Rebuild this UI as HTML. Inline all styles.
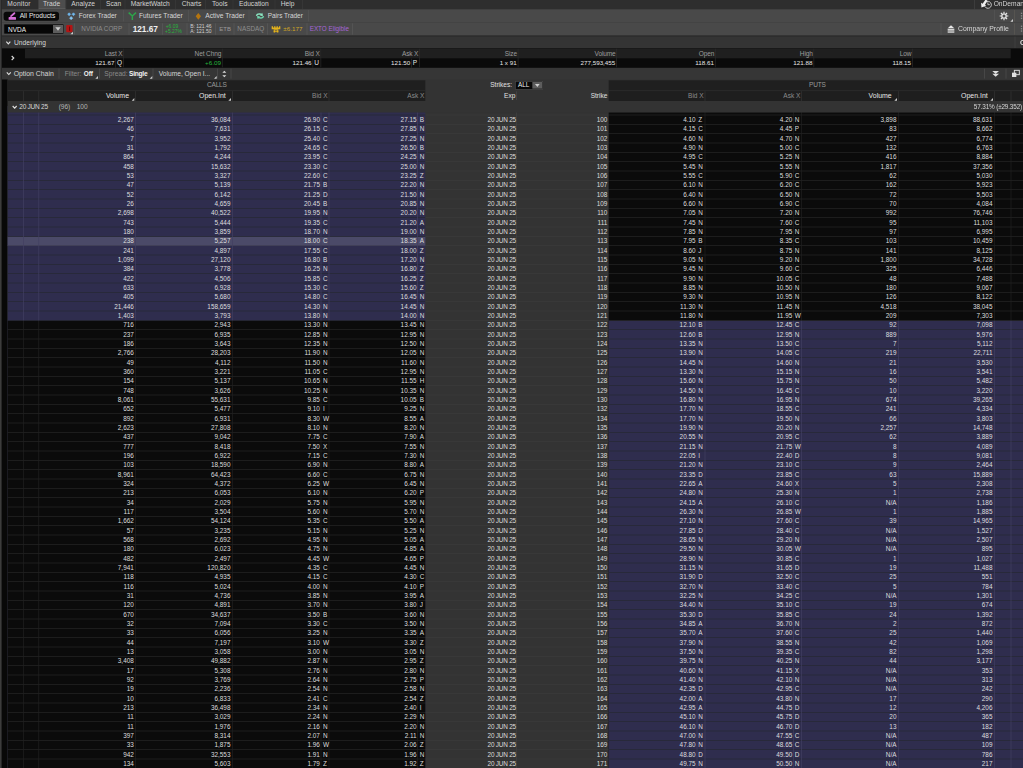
<!DOCTYPE html>
<html><head><meta charset="utf-8"><title>thinkorswim</title>
<style>
html,body{margin:0;padding:0;background:#0a0a0a;overflow:hidden;}
body{width:1023px;height:768px;position:relative;font-family:"Liberation Sans",sans-serif;}
#w{position:absolute;left:0;top:0;width:1534.5px;height:1152px;transform:scale(0.666667);transform-origin:0 0;overflow:hidden;}
#w div,#w svg{position:absolute;}
#w .t{white-space:nowrap;}
</style></head><body><div id="w">
<svg style="left:0;top:0" width="1534.5" height="1152" viewBox="0 0 1534.5 1152">
<rect x="0" y="0" width="1534.5" height="1152" fill="#0a0a0a"/>
<rect x="0" y="0" width="1534.5" height="1152" fill="#2e2e2e"/>
<rect x="57" y="0" width="41.5" height="14" fill="#4d4d4d"/>
<rect x="57" y="12.3" width="41.5" height="1.7" fill="#5c5c5c"/>
<rect x="57" y="0" width="1" height="14" fill="#3b3b3b"/>
<rect x="98.5" y="0" width="1" height="14" fill="#3b3b3b"/>
<rect x="150" y="0" width="1" height="14" fill="#3b3b3b"/>
<rect x="187" y="0" width="1" height="14" fill="#3b3b3b"/>
<rect x="263" y="0" width="1" height="14" fill="#3b3b3b"/>
<rect x="308" y="0" width="1" height="14" fill="#3b3b3b"/>
<rect x="349" y="0" width="1" height="14" fill="#3b3b3b"/>
<rect x="412" y="0" width="1" height="14" fill="#3b3b3b"/>
<rect x="453" y="0" width="1" height="14" fill="#3b3b3b"/>
<rect x="1461" y="0" width="1" height="14" fill="#444"/>
<g transform="translate(1468 0)"><path d="M10.6 3.2A5.2 5.2 0 1 1 9.2 9.6" fill="none" stroke="#dcdcdc" stroke-width="1.3"/><path d="M13.8 3.6v3.4h3" fill="none" stroke="#dcdcdc" stroke-width="1.2"/><path d="M10.2 -0.5L13.2 0.8 9.4 7.4 11.4 8.8 4.2 11.2 3.6 4.2 5.9 5.6z" fill="#efefef"/></g>
<rect x="0" y="14" width="1534.5" height="1152" fill="#494949"/>
<rect x="0" y="33" width="1534.5" height="1" fill="#414141"/>
<rect x="5.5" y="17.5" width="83" height="13.5" fill="#090909" rx="4"/>
<rect x="184.5" y="15" width="1" height="17" fill="#565656"/>
<rect x="282.5" y="15" width="1" height="17" fill="#565656"/>
<rect x="373" y="15" width="1" height="17" fill="#565656"/>
<rect x="462" y="15" width="1" height="17" fill="#565656"/>
<g transform="translate(9 17)"><path d="M7.6 7.2L12.6 2.8" stroke="#d570d6" stroke-width="2.7" stroke-linecap="round" fill="none"/><rect x="3.9" y="8.6" width="11.1" height="4.1" rx="1" fill="#d570d6"/></g>
<g transform="translate(100 17)"><path d="M3.7 2.2L5.9 4.4L3.7 6.6000000000000005L1.5 4.4z" fill="#6fb8ee" stroke="#6fb8ee" stroke-width="1" stroke-linejoin="round"/><path d="M10.2 2.2L12.399999999999999 4.4L10.2 6.6000000000000005L7.999999999999999 4.4z" fill="#6fb8ee" stroke="#6fb8ee" stroke-width="1" stroke-linejoin="round"/><path d="M6.7 7.8999999999999995L9.0 10.2L6.7 12.5L4.4 10.2z" fill="#86c8f6" stroke="#86c8f6" stroke-width="1" stroke-linejoin="round"/></g>
<g transform="translate(191 17)"><path d="M2 2l5.5 5v6M13 2l-5.5 5" fill="none" stroke="#2da44a" stroke-width="2.2"/></g>
<g transform="translate(291 18)"><path d="M6.5 1.5l4 5-4 5-4-5z" fill="#b4740f"/></g>
<g transform="translate(383 18.5)"><path d="M0.8 5.2C1.2 1.6 5.5 0.6 9 2.2l1.3-1.6 1.4 4.6-4.6 0.2 1-1.5C5.6 2.9 3.2 3.6 2.8 5.6z" fill="#8ce6c2"/><path d="M13.2 5.8C12.8 9.4 8.5 10.4 5 8.8l-1.3 1.6L2.3 5.8l4.6-0.2-1 1.5c2.5 1 4.9 0.3 5.3-1.7z" fill="#6fd6ae"/></g>
<g transform="translate(1499 17)"><circle cx="7" cy="7" r="3.3" fill="none" stroke="#e6e6e6" stroke-width="2"/><g stroke="#e6e6e6" stroke-width="1.8"><path d="M7 0.5v2.3M7 11.2v2.3M0.5 7h2.3M11.2 7h2.3M2.4 2.4l1.6 1.6M10 10l1.6 1.6M11.6 2.4L10 4M4 10l-1.6 1.6"/></g></g>
<g transform="translate(1515.5 28.5)"><path d="M4 0v4H0z" fill="#ccc"/></g>
<rect x="1491.5" y="15" width="1" height="17" fill="#565656"/>
<rect x="1521" y="15" width="1" height="17" fill="#5e5a54"/>
<rect x="1531.3" y="19" width="2" height="2" fill="#8a8a8a"/>
<rect x="1531.3" y="22.8" width="2" height="2" fill="#8a8a8a"/>
<rect x="1531.3" y="26.5" width="2" height="2" fill="#8a8a8a"/>
<rect x="5.8" y="36" width="90" height="15" fill="#060606" stroke="#505050" stroke-width="1"/>
<rect x="79.5" y="37.5" width="15" height="12" fill="#5d5d5d"/>
<g transform="translate(83 41)"><path d="M0 0h8L4 5z" fill="#cfcfcf"/></g>
<rect x="99.3" y="37.5" width="9.5" height="11" fill="#b31414" rx="1.5"/>
<rect x="103.6" y="39.8" width="1.5" height="6.5" fill="#6a0808"/>
<g transform="translate(105.5 47.5)"><path d="M4 0v4H0z" fill="#ccc"/></g>
<rect x="111.5" y="35" width="1" height="17" fill="#5a5a5a"/>
<rect x="193" y="35" width="1" height="17" fill="#5a5a5a"/>
<rect x="243" y="35" width="1" height="17" fill="#5a5a5a"/>
<rect x="280" y="35" width="1" height="17" fill="#5a5a5a"/>
<rect x="323" y="35" width="1" height="17" fill="#5a5a5a"/>
<rect x="350.5" y="35" width="1" height="17" fill="#5a5a5a"/>
<rect x="400.5" y="35" width="1" height="17" fill="#5a5a5a"/>
<g transform="translate(407.5 39.3)"><path d="M0 0h2v2h1.7V0h2v2h1.6V0h2v2h1.7V0h2v4.6H0z" fill="#e3b21c"/><rect x="3" y="4.6" width="7" height="1.4" fill="#e3b21c"/><rect x="3" y="6" width="2.3" height="3.5" fill="#e3b21c"/><rect x="7.7" y="6" width="2.3" height="3.5" fill="#e3b21c"/><rect x="3" y="7" width="7" height="1.3" fill="#e3b21c"/></g>
<rect x="460" y="35" width="1" height="17" fill="#5a5a5a"/>
<rect x="528.5" y="35" width="1" height="17" fill="#5a5a5a"/>
<rect x="1411" y="35" width="1" height="17" fill="#5a5a5a"/>
<g transform="translate(1421 38)"><path d="M5.5 0L10 4H1z" fill="#e8e8e8"/><rect x="0.5" y="5" width="10" height="1.8" fill="#e8e8e8"/><rect x="0.5" y="7.6" width="10" height="1.6" fill="#e8e8e8"/><rect x="0.5" y="9.6" width="10" height="1.4" fill="#e8e8e8"/></g>
<rect x="1521" y="35" width="1" height="17" fill="#5e5a54"/>
<rect x="1531.3" y="38.4" width="2" height="2" fill="#8a8a8a"/>
<rect x="1531.3" y="42.1" width="2" height="2" fill="#8a8a8a"/>
<rect x="1531.3" y="45.6" width="2" height="2" fill="#8a8a8a"/>
<rect x="0" y="53" width="1534.5" height="1152" fill="#2a2a2a"/>
<rect x="0" y="55" width="1534.5" height="1152" fill="#343434"/>
<rect x="1522" y="55" width="1" height="17.5" fill="#474747"/>
<g transform="translate(8.5 61.5)"><path d="M1 1l3 3.2L7 1" fill="none" stroke="#e0e0e0" stroke-width="1.7"/></g>
<rect x="2.5" y="72.5" width="1534.5" height="1152" fill="#0a0a0a"/>
<rect x="37.5" y="73" width="1478.6" height="14.5" fill="#1f1f1f"/>
<rect x="185" y="73" width="1" height="28" fill="#2c2c2c"/>
<rect x="332.9" y="73" width="1" height="28" fill="#2c2c2c"/>
<rect x="480.8" y="73" width="1" height="28" fill="#2c2c2c"/>
<rect x="628.7" y="73" width="1" height="28" fill="#2c2c2c"/>
<rect x="776.6" y="73" width="1" height="28" fill="#2c2c2c"/>
<rect x="924.5" y="73" width="1" height="28" fill="#2c2c2c"/>
<rect x="1072.4" y="73" width="1" height="28" fill="#2c2c2c"/>
<rect x="1220.3" y="73" width="1" height="28" fill="#2c2c2c"/>
<rect x="1368.2" y="73" width="1" height="28" fill="#2c2c2c"/>
<g transform="translate(16.5 83)"><path d="M1 1l3.2 3L1 7" fill="none" stroke="#e0e0e0" stroke-width="1.6"/></g>
<rect x="173" y="88" width="1" height="13.6" fill="#2c2c2c"/>
<rect x="468.8" y="88" width="1" height="13.6" fill="#2c2c2c"/>
<rect x="616.7" y="88" width="1" height="13.6" fill="#2c2c2c"/>
<rect x="0" y="101.7" width="1534.5" height="1152" fill="#363636"/>
<g transform="translate(9.2 107.6)"><path d="M1 1l3 3.2L7 1" fill="none" stroke="#e0e0e0" stroke-width="1.7"/></g>
<rect x="88" y="103" width="1" height="15" fill="#505050"/>
<rect x="148.5" y="103" width="1" height="15" fill="#505050"/>
<rect x="229" y="103" width="1" height="15" fill="#505050"/>
<rect x="326" y="103" width="1" height="15" fill="#505050"/>
<rect x="346" y="103" width="1" height="15" fill="#505050"/>
<g transform="translate(143 114)"><path d="M4 0v4H0z" fill="#ccc"/></g>
<g transform="translate(224.5 114)"><path d="M4 0v4H0z" fill="#ccc"/></g>
<g transform="translate(321 114)"><path d="M4 0v4H0z" fill="#ccc"/></g>
<g transform="translate(333 105)"><path d="M0.5 4l3-3 3 3zM0.5 8l3 3 3-3z" fill="#dcdcdc"/></g>
<rect x="1476.5" y="103" width="1" height="15" fill="#505050"/>
<rect x="1508.5" y="103" width="1" height="15" fill="#505050"/>
<g transform="translate(1486.5 104)"><path d="M2 2.5h10L7 7z" fill="#e0e0e0"/><path d="M2 6.5h10L7 11z" fill="#e0e0e0"/></g>
<g transform="translate(1516.5 104)"><rect x="5" y="1.5" width="7.5" height="6.5" fill="#3b3b3b" stroke="#e0e0e0" stroke-width="1.4"/><rect x="1.5" y="5" width="6.5" height="6.5" fill="#e0e0e0"/></g>
<rect x="2.5" y="119.2" width="9" height="1152" fill="#080808"/>
<rect x="11.5" y="159" width="1523" height="1152" fill="#333333"/>
<rect x="11.5" y="159" width="626.5" height="1152" fill="#2f2d4e"/>
<rect x="11.5" y="481" width="626.5" height="1152" fill="#0b0b0b"/>
<rect x="913" y="159" width="621.5" height="1152" fill="#0b0b0b"/>
<rect x="913" y="481" width="621.5" height="1152" fill="#2f2d4e"/>
<rect x="11.5" y="355" width="626.5" height="14" fill="#4b4a68"/>
<rect x="11.5" y="172" width="626.5" height="1" fill="#262730"/>
<rect x="638" y="172" width="275" height="1" fill="#3b3b3b"/>
<rect x="913" y="172" width="621.5" height="1" fill="#272727"/>
<rect x="11.5" y="186" width="626.5" height="1" fill="#262730"/>
<rect x="638" y="186" width="275" height="1" fill="#3b3b3b"/>
<rect x="913" y="186" width="621.5" height="1" fill="#272727"/>
<rect x="11.5" y="200" width="626.5" height="1" fill="#262730"/>
<rect x="638" y="200" width="275" height="1" fill="#3b3b3b"/>
<rect x="913" y="200" width="621.5" height="1" fill="#272727"/>
<rect x="11.5" y="214" width="626.5" height="1" fill="#262730"/>
<rect x="638" y="214" width="275" height="1" fill="#3b3b3b"/>
<rect x="913" y="214" width="621.5" height="1" fill="#272727"/>
<rect x="11.5" y="228" width="626.5" height="1" fill="#262730"/>
<rect x="638" y="228" width="275" height="1" fill="#3b3b3b"/>
<rect x="913" y="228" width="621.5" height="1" fill="#272727"/>
<rect x="11.5" y="242" width="626.5" height="1" fill="#262730"/>
<rect x="638" y="242" width="275" height="1" fill="#3b3b3b"/>
<rect x="913" y="242" width="621.5" height="1" fill="#272727"/>
<rect x="11.5" y="256" width="626.5" height="1" fill="#262730"/>
<rect x="638" y="256" width="275" height="1" fill="#3b3b3b"/>
<rect x="913" y="256" width="621.5" height="1" fill="#272727"/>
<rect x="11.5" y="270" width="626.5" height="1" fill="#262730"/>
<rect x="638" y="270" width="275" height="1" fill="#3b3b3b"/>
<rect x="913" y="270" width="621.5" height="1" fill="#272727"/>
<rect x="11.5" y="284" width="626.5" height="1" fill="#262730"/>
<rect x="638" y="284" width="275" height="1" fill="#3b3b3b"/>
<rect x="913" y="284" width="621.5" height="1" fill="#272727"/>
<rect x="11.5" y="298" width="626.5" height="1" fill="#262730"/>
<rect x="638" y="298" width="275" height="1" fill="#3b3b3b"/>
<rect x="913" y="298" width="621.5" height="1" fill="#272727"/>
<rect x="11.5" y="312" width="626.5" height="1" fill="#262730"/>
<rect x="638" y="312" width="275" height="1" fill="#3b3b3b"/>
<rect x="913" y="312" width="621.5" height="1" fill="#272727"/>
<rect x="11.5" y="326" width="626.5" height="1" fill="#262730"/>
<rect x="638" y="326" width="275" height="1" fill="#3b3b3b"/>
<rect x="913" y="326" width="621.5" height="1" fill="#272727"/>
<rect x="11.5" y="340" width="626.5" height="1" fill="#262730"/>
<rect x="638" y="340" width="275" height="1" fill="#3b3b3b"/>
<rect x="913" y="340" width="621.5" height="1" fill="#272727"/>
<rect x="11.5" y="354" width="626.5" height="1" fill="#262730"/>
<rect x="638" y="354" width="275" height="1" fill="#3b3b3b"/>
<rect x="913" y="354" width="621.5" height="1" fill="#272727"/>
<rect x="11.5" y="368" width="626.5" height="1" fill="#3c3c52"/>
<rect x="638" y="368" width="275" height="1" fill="#3b3b3b"/>
<rect x="913" y="368" width="621.5" height="1" fill="#272727"/>
<rect x="11.5" y="382" width="626.5" height="1" fill="#262730"/>
<rect x="638" y="382" width="275" height="1" fill="#3b3b3b"/>
<rect x="913" y="382" width="621.5" height="1" fill="#272727"/>
<rect x="11.5" y="396" width="626.5" height="1" fill="#262730"/>
<rect x="638" y="396" width="275" height="1" fill="#3b3b3b"/>
<rect x="913" y="396" width="621.5" height="1" fill="#272727"/>
<rect x="11.5" y="410" width="626.5" height="1" fill="#262730"/>
<rect x="638" y="410" width="275" height="1" fill="#3b3b3b"/>
<rect x="913" y="410" width="621.5" height="1" fill="#272727"/>
<rect x="11.5" y="424" width="626.5" height="1" fill="#262730"/>
<rect x="638" y="424" width="275" height="1" fill="#3b3b3b"/>
<rect x="913" y="424" width="621.5" height="1" fill="#272727"/>
<rect x="11.5" y="438" width="626.5" height="1" fill="#262730"/>
<rect x="638" y="438" width="275" height="1" fill="#3b3b3b"/>
<rect x="913" y="438" width="621.5" height="1" fill="#272727"/>
<rect x="11.5" y="452" width="626.5" height="1" fill="#262730"/>
<rect x="638" y="452" width="275" height="1" fill="#3b3b3b"/>
<rect x="913" y="452" width="621.5" height="1" fill="#272727"/>
<rect x="11.5" y="466" width="626.5" height="1" fill="#262730"/>
<rect x="638" y="466" width="275" height="1" fill="#3b3b3b"/>
<rect x="913" y="466" width="621.5" height="1" fill="#272727"/>
<rect x="11.5" y="480" width="626.5" height="1" fill="#262730"/>
<rect x="638" y="480" width="275" height="1" fill="#3b3b3b"/>
<rect x="913" y="480" width="621.5" height="1" fill="#272727"/>
<rect x="11.5" y="494" width="626.5" height="1" fill="#272727"/>
<rect x="638" y="494" width="275" height="1" fill="#3b3b3b"/>
<rect x="913" y="494" width="621.5" height="1" fill="#262730"/>
<rect x="11.5" y="508" width="626.5" height="1" fill="#272727"/>
<rect x="638" y="508" width="275" height="1" fill="#3b3b3b"/>
<rect x="913" y="508" width="621.5" height="1" fill="#262730"/>
<rect x="11.5" y="522" width="626.5" height="1" fill="#272727"/>
<rect x="638" y="522" width="275" height="1" fill="#3b3b3b"/>
<rect x="913" y="522" width="621.5" height="1" fill="#262730"/>
<rect x="11.5" y="536" width="626.5" height="1" fill="#272727"/>
<rect x="638" y="536" width="275" height="1" fill="#3b3b3b"/>
<rect x="913" y="536" width="621.5" height="1" fill="#262730"/>
<rect x="11.5" y="550" width="626.5" height="1" fill="#272727"/>
<rect x="638" y="550" width="275" height="1" fill="#3b3b3b"/>
<rect x="913" y="550" width="621.5" height="1" fill="#262730"/>
<rect x="11.5" y="564" width="626.5" height="1" fill="#272727"/>
<rect x="638" y="564" width="275" height="1" fill="#3b3b3b"/>
<rect x="913" y="564" width="621.5" height="1" fill="#262730"/>
<rect x="11.5" y="578" width="626.5" height="1" fill="#272727"/>
<rect x="638" y="578" width="275" height="1" fill="#3b3b3b"/>
<rect x="913" y="578" width="621.5" height="1" fill="#262730"/>
<rect x="11.5" y="592" width="626.5" height="1" fill="#272727"/>
<rect x="638" y="592" width="275" height="1" fill="#3b3b3b"/>
<rect x="913" y="592" width="621.5" height="1" fill="#262730"/>
<rect x="11.5" y="606" width="626.5" height="1" fill="#272727"/>
<rect x="638" y="606" width="275" height="1" fill="#3b3b3b"/>
<rect x="913" y="606" width="621.5" height="1" fill="#262730"/>
<rect x="11.5" y="620" width="626.5" height="1" fill="#272727"/>
<rect x="638" y="620" width="275" height="1" fill="#3b3b3b"/>
<rect x="913" y="620" width="621.5" height="1" fill="#262730"/>
<rect x="11.5" y="634" width="626.5" height="1" fill="#272727"/>
<rect x="638" y="634" width="275" height="1" fill="#3b3b3b"/>
<rect x="913" y="634" width="621.5" height="1" fill="#262730"/>
<rect x="11.5" y="648" width="626.5" height="1" fill="#272727"/>
<rect x="638" y="648" width="275" height="1" fill="#3b3b3b"/>
<rect x="913" y="648" width="621.5" height="1" fill="#262730"/>
<rect x="11.5" y="662" width="626.5" height="1" fill="#272727"/>
<rect x="638" y="662" width="275" height="1" fill="#3b3b3b"/>
<rect x="913" y="662" width="621.5" height="1" fill="#262730"/>
<rect x="11.5" y="676" width="626.5" height="1" fill="#272727"/>
<rect x="638" y="676" width="275" height="1" fill="#3b3b3b"/>
<rect x="913" y="676" width="621.5" height="1" fill="#262730"/>
<rect x="11.5" y="690" width="626.5" height="1" fill="#272727"/>
<rect x="638" y="690" width="275" height="1" fill="#3b3b3b"/>
<rect x="913" y="690" width="621.5" height="1" fill="#262730"/>
<rect x="11.5" y="704" width="626.5" height="1" fill="#272727"/>
<rect x="638" y="704" width="275" height="1" fill="#3b3b3b"/>
<rect x="913" y="704" width="621.5" height="1" fill="#262730"/>
<rect x="11.5" y="718" width="626.5" height="1" fill="#272727"/>
<rect x="638" y="718" width="275" height="1" fill="#3b3b3b"/>
<rect x="913" y="718" width="621.5" height="1" fill="#262730"/>
<rect x="11.5" y="732" width="626.5" height="1" fill="#272727"/>
<rect x="638" y="732" width="275" height="1" fill="#3b3b3b"/>
<rect x="913" y="732" width="621.5" height="1" fill="#262730"/>
<rect x="11.5" y="746" width="626.5" height="1" fill="#272727"/>
<rect x="638" y="746" width="275" height="1" fill="#3b3b3b"/>
<rect x="913" y="746" width="621.5" height="1" fill="#262730"/>
<rect x="11.5" y="760" width="626.5" height="1" fill="#272727"/>
<rect x="638" y="760" width="275" height="1" fill="#3b3b3b"/>
<rect x="913" y="760" width="621.5" height="1" fill="#262730"/>
<rect x="11.5" y="774" width="626.5" height="1" fill="#272727"/>
<rect x="638" y="774" width="275" height="1" fill="#3b3b3b"/>
<rect x="913" y="774" width="621.5" height="1" fill="#262730"/>
<rect x="11.5" y="788" width="626.5" height="1" fill="#272727"/>
<rect x="638" y="788" width="275" height="1" fill="#3b3b3b"/>
<rect x="913" y="788" width="621.5" height="1" fill="#262730"/>
<rect x="11.5" y="802" width="626.5" height="1" fill="#272727"/>
<rect x="638" y="802" width="275" height="1" fill="#3b3b3b"/>
<rect x="913" y="802" width="621.5" height="1" fill="#262730"/>
<rect x="11.5" y="816" width="626.5" height="1" fill="#272727"/>
<rect x="638" y="816" width="275" height="1" fill="#3b3b3b"/>
<rect x="913" y="816" width="621.5" height="1" fill="#262730"/>
<rect x="11.5" y="830" width="626.5" height="1" fill="#272727"/>
<rect x="638" y="830" width="275" height="1" fill="#3b3b3b"/>
<rect x="913" y="830" width="621.5" height="1" fill="#262730"/>
<rect x="11.5" y="844" width="626.5" height="1" fill="#272727"/>
<rect x="638" y="844" width="275" height="1" fill="#3b3b3b"/>
<rect x="913" y="844" width="621.5" height="1" fill="#262730"/>
<rect x="11.5" y="858" width="626.5" height="1" fill="#272727"/>
<rect x="638" y="858" width="275" height="1" fill="#3b3b3b"/>
<rect x="913" y="858" width="621.5" height="1" fill="#262730"/>
<rect x="11.5" y="872" width="626.5" height="1" fill="#272727"/>
<rect x="638" y="872" width="275" height="1" fill="#3b3b3b"/>
<rect x="913" y="872" width="621.5" height="1" fill="#262730"/>
<rect x="11.5" y="886" width="626.5" height="1" fill="#272727"/>
<rect x="638" y="886" width="275" height="1" fill="#3b3b3b"/>
<rect x="913" y="886" width="621.5" height="1" fill="#262730"/>
<rect x="11.5" y="900" width="626.5" height="1" fill="#272727"/>
<rect x="638" y="900" width="275" height="1" fill="#3b3b3b"/>
<rect x="913" y="900" width="621.5" height="1" fill="#262730"/>
<rect x="11.5" y="914" width="626.5" height="1" fill="#272727"/>
<rect x="638" y="914" width="275" height="1" fill="#3b3b3b"/>
<rect x="913" y="914" width="621.5" height="1" fill="#262730"/>
<rect x="11.5" y="928" width="626.5" height="1" fill="#272727"/>
<rect x="638" y="928" width="275" height="1" fill="#3b3b3b"/>
<rect x="913" y="928" width="621.5" height="1" fill="#262730"/>
<rect x="11.5" y="942" width="626.5" height="1" fill="#272727"/>
<rect x="638" y="942" width="275" height="1" fill="#3b3b3b"/>
<rect x="913" y="942" width="621.5" height="1" fill="#262730"/>
<rect x="11.5" y="956" width="626.5" height="1" fill="#272727"/>
<rect x="638" y="956" width="275" height="1" fill="#3b3b3b"/>
<rect x="913" y="956" width="621.5" height="1" fill="#262730"/>
<rect x="11.5" y="970" width="626.5" height="1" fill="#272727"/>
<rect x="638" y="970" width="275" height="1" fill="#3b3b3b"/>
<rect x="913" y="970" width="621.5" height="1" fill="#262730"/>
<rect x="11.5" y="984" width="626.5" height="1" fill="#272727"/>
<rect x="638" y="984" width="275" height="1" fill="#3b3b3b"/>
<rect x="913" y="984" width="621.5" height="1" fill="#262730"/>
<rect x="11.5" y="998" width="626.5" height="1" fill="#272727"/>
<rect x="638" y="998" width="275" height="1" fill="#3b3b3b"/>
<rect x="913" y="998" width="621.5" height="1" fill="#262730"/>
<rect x="11.5" y="1012" width="626.5" height="1" fill="#272727"/>
<rect x="638" y="1012" width="275" height="1" fill="#3b3b3b"/>
<rect x="913" y="1012" width="621.5" height="1" fill="#262730"/>
<rect x="11.5" y="1026" width="626.5" height="1" fill="#272727"/>
<rect x="638" y="1026" width="275" height="1" fill="#3b3b3b"/>
<rect x="913" y="1026" width="621.5" height="1" fill="#262730"/>
<rect x="11.5" y="1040" width="626.5" height="1" fill="#272727"/>
<rect x="638" y="1040" width="275" height="1" fill="#3b3b3b"/>
<rect x="913" y="1040" width="621.5" height="1" fill="#262730"/>
<rect x="11.5" y="1054" width="626.5" height="1" fill="#272727"/>
<rect x="638" y="1054" width="275" height="1" fill="#3b3b3b"/>
<rect x="913" y="1054" width="621.5" height="1" fill="#262730"/>
<rect x="11.5" y="1068" width="626.5" height="1" fill="#272727"/>
<rect x="638" y="1068" width="275" height="1" fill="#3b3b3b"/>
<rect x="913" y="1068" width="621.5" height="1" fill="#262730"/>
<rect x="11.5" y="1082" width="626.5" height="1" fill="#272727"/>
<rect x="638" y="1082" width="275" height="1" fill="#3b3b3b"/>
<rect x="913" y="1082" width="621.5" height="1" fill="#262730"/>
<rect x="11.5" y="1096" width="626.5" height="1" fill="#272727"/>
<rect x="638" y="1096" width="275" height="1" fill="#3b3b3b"/>
<rect x="913" y="1096" width="621.5" height="1" fill="#262730"/>
<rect x="11.5" y="1110" width="626.5" height="1" fill="#272727"/>
<rect x="638" y="1110" width="275" height="1" fill="#3b3b3b"/>
<rect x="913" y="1110" width="621.5" height="1" fill="#262730"/>
<rect x="11.5" y="1124" width="626.5" height="1" fill="#272727"/>
<rect x="638" y="1124" width="275" height="1" fill="#3b3b3b"/>
<rect x="913" y="1124" width="621.5" height="1" fill="#262730"/>
<rect x="11.5" y="1138" width="626.5" height="1" fill="#272727"/>
<rect x="638" y="1138" width="275" height="1" fill="#3b3b3b"/>
<rect x="913" y="1138" width="621.5" height="1" fill="#262730"/>
<rect x="11.5" y="1152" width="626.5" height="1" fill="#272727"/>
<rect x="638" y="1152" width="275" height="1" fill="#3b3b3b"/>
<rect x="913" y="1152" width="621.5" height="1" fill="#262730"/>
<rect x="34.7" y="159" width="1" height="322" fill="#424062"/>
<rect x="34.7" y="481" width="1" height="671" fill="#222222"/>
<rect x="57.7" y="159" width="1" height="322" fill="#424062"/>
<rect x="57.7" y="481" width="1" height="671" fill="#222222"/>
<rect x="203" y="159" width="1" height="322" fill="#424062"/>
<rect x="203" y="481" width="1" height="671" fill="#222222"/>
<rect x="348" y="159" width="1" height="322" fill="#424062"/>
<rect x="348" y="481" width="1" height="671" fill="#222222"/>
<rect x="493" y="159" width="1" height="322" fill="#424062"/>
<rect x="493" y="481" width="1" height="671" fill="#222222"/>
<rect x="481" y="159" width="1" height="322" fill="#424062"/>
<rect x="481" y="481" width="1" height="671" fill="#222222"/>
<rect x="626" y="159" width="1" height="322" fill="#424062"/>
<rect x="626" y="481" width="1" height="671" fill="#222222"/>
<rect x="774.5" y="159" width="1" height="993" fill="#424242"/>
<rect x="1057" y="159" width="1" height="322" fill="#222222"/>
<rect x="1057" y="481" width="1" height="671" fill="#424062"/>
<rect x="1202" y="159" width="1" height="322" fill="#222222"/>
<rect x="1202" y="481" width="1" height="671" fill="#424062"/>
<rect x="1347" y="159" width="1" height="322" fill="#222222"/>
<rect x="1347" y="481" width="1" height="671" fill="#424062"/>
<rect x="1491" y="159" width="1" height="322" fill="#222222"/>
<rect x="1491" y="481" width="1" height="671" fill="#424062"/>
<rect x="1516" y="159" width="1" height="322" fill="#222222"/>
<rect x="1516" y="481" width="1" height="671" fill="#424062"/>
<rect x="1045" y="159" width="1" height="322" fill="#222222"/>
<rect x="1045" y="481" width="1" height="671" fill="#424062"/>
<rect x="1190" y="159" width="1" height="322" fill="#222222"/>
<rect x="1190" y="481" width="1" height="671" fill="#424062"/>
<rect x="11.5" y="119.2" width="1523" height="49.6" fill="#333333"/>
<rect x="11.5" y="120.5" width="626.5" height="14.5" fill="#1f1f1f"/>
<rect x="11.5" y="135.5" width="626.5" height="16" fill="#1e1e1e"/>
<rect x="11.5" y="135.6" width="626.5" height="1" fill="#2b2b2b"/>
<rect x="913" y="120.5" width="621.5" height="14.5" fill="#1f1f1f"/>
<rect x="913" y="135.5" width="621.5" height="16" fill="#1e1e1e"/>
<rect x="913" y="135.6" width="621.5" height="1" fill="#2b2b2b"/>
<rect x="34.7" y="136.6" width="1" height="14.9" fill="#333"/>
<rect x="57.7" y="136.6" width="1" height="14.9" fill="#333"/>
<rect x="203" y="136.6" width="1" height="14.9" fill="#333"/>
<rect x="348" y="136.6" width="1" height="14.9" fill="#333"/>
<rect x="493" y="136.6" width="1" height="14.9" fill="#333"/>
<rect x="1057" y="136.6" width="1" height="14.9" fill="#333"/>
<rect x="1202" y="136.6" width="1" height="14.9" fill="#333"/>
<rect x="1347" y="136.6" width="1" height="14.9" fill="#333"/>
<rect x="1491" y="136.6" width="1" height="14.9" fill="#333"/>
<rect x="1516" y="136.6" width="1" height="14.9" fill="#333"/>
<g transform="translate(197.5 147)"><path d="M4 0v4H0z" fill="#ccc"/></g>
<g transform="translate(342.5 147)"><path d="M4 0v4H0z" fill="#ccc"/></g>
<g transform="translate(1341.5 147)"><path d="M4 0v4H0z" fill="#ccc"/></g>
<g transform="translate(1485.5 147)"><path d="M4 0v4H0z" fill="#ccc"/></g>
<rect x="773" y="122" width="41" height="12" fill="#080808" stroke="#4a4a4a" stroke-width="1"/>
<rect x="798.5" y="123" width="14.5" height="10" fill="#5d5d5d"/>
<g transform="translate(802 126)"><path d="M0.5 0h7L4 4.5z" fill="#cfcfcf"/></g>
<rect x="774.5" y="137" width="1" height="13" fill="#4a4a4a"/>
<g transform="translate(18 158)"><path d="M1 1l3 3.2L7 1" fill="none" stroke="#e0e0e0" stroke-width="1.7"/></g>
<rect x="1.8" y="0" width="1.2" height="1152" fill="#1e1e1e"/>
<rect x="0" y="0" width="1.9" height="1152" fill="#3c3c3c"/>
</svg>
<div class="t" style="left:11px;top:-1.2px;line-height:14px;font-size:10px;color:#d2d2d2;letter-spacing:0.25px;">Monitor</div>
<div class="t" style="left:64.5px;top:-1.2px;line-height:14px;font-size:10px;color:#d2d2d2;">Trade</div>
<div class="t" style="left:107px;top:-1.2px;line-height:14px;font-size:10px;color:#d2d2d2;">Analyze</div>
<div class="t" style="left:159px;top:-1.2px;line-height:14px;font-size:10px;color:#d2d2d2;">Scan</div>
<div class="t" style="left:196px;top:-1.2px;line-height:14px;font-size:10px;color:#d2d2d2;">MarketWatch</div>
<div class="t" style="left:272.5px;top:-1.2px;line-height:14px;font-size:10px;color:#d2d2d2;">Charts</div>
<div class="t" style="left:318px;top:-1.2px;line-height:14px;font-size:10px;color:#d2d2d2;">Tools</div>
<div class="t" style="left:358.5px;top:-1.2px;line-height:14px;font-size:10px;color:#d2d2d2;">Education</div>
<div class="t" style="left:421px;top:-1.2px;line-height:14px;font-size:10px;color:#d2d2d2;">Help</div>
<div class="t" style="left:1490.5px;top:-1.2px;line-height:14px;font-size:10px;color:#d2d2d2;">OnDemand</div>
<div class="t" style="left:29.5px;top:16.7px;line-height:14px;font-size:10px;color:#e8e8e8;">All Products</div>
<div class="t" style="left:118px;top:16.7px;line-height:14px;font-size:10px;color:#d6d6d6;">Forex Trader</div>
<div class="t" style="left:208.5px;top:16.7px;line-height:14px;font-size:10px;color:#d6d6d6;">Futures Trader</div>
<div class="t" style="left:308px;top:16.7px;line-height:14px;font-size:10px;color:#d6d6d6;">Active Trader</div>
<div class="t" style="left:401.5px;top:16.7px;line-height:14px;font-size:9.7px;color:#d6d6d6;">Pairs Trader</div>
<div class="t" style="left:12px;top:37.8px;line-height:14px;font-size:9.7px;color:#eeeeee;">NVDA</div>
<div class="t" style="left:122px;top:37px;line-height:14px;font-size:9.5px;color:#8e8e8e;">NVIDIA CORP</div>
<div class="t" style="left:199px;top:37px;line-height:14px;font-size:12.4px;color:#efefef;font-weight:700;">121.67</div>
<div class="t" style="left:248.5px;top:35.6px;line-height:8px;font-size:7.4px;color:#26b43c;">+6.09</div>
<div class="t" style="left:247.5px;top:43.1px;line-height:8px;font-size:7.4px;color:#26b43c;">+5.27%</div>
<div class="t" style="left:285.3px;top:35.6px;line-height:8px;font-size:7.5px;color:#d0d0d0;">B: 121.46</div>
<div class="t" style="left:285.3px;top:43.1px;line-height:8px;font-size:7.5px;color:#d0d0d0;">A: 121.50</div>
<div class="t" style="left:329px;top:37px;line-height:14px;font-size:9px;color:#9a9a9a;">ETB</div>
<div class="t" style="left:356px;top:37px;line-height:14px;font-size:9.6px;color:#8e8e8e;">NASDAQ</div>
<div class="t" style="left:425px;top:37px;line-height:14px;font-size:9.4px;color:#cfa526;">±6.177</div>
<div class="t" style="left:464.5px;top:37px;line-height:14px;font-size:9.5px;color:#a565d6;">EXTO Eligible</div>
<div class="t" style="left:1437px;top:37px;line-height:14px;font-size:10.3px;color:#d6d6d6;">Company Profile</div>
<div class="t" style="left:1530px;top:57.5px;line-height:14px;font-size:10.4px;color:#e0e0e0;font-weight:700;">C</div>
<div class="t" style="left:21px;top:57.5px;line-height:14px;font-size:10px;color:#d6d6d6;">Underlying</div>
<div class="t" style="right:1350.7px;top:73.5px;line-height:14px;font-size:9.8px;color:#9c9c9c;letter-spacing:-0.2px;">Last X</div>
<div class="t" style="right:1362.9px;top:88.2px;line-height:14px;font-size:9.4px;color:#e6e6e6;">121.67</div>
<div class="t" style="left:175.6px;top:88.2px;line-height:14px;font-size:9.8px;color:#e6e6e6;">Q</div>
<div class="t" style="right:1202.8px;top:73.5px;line-height:14px;font-size:9.8px;color:#9c9c9c;letter-spacing:-0.2px;">Net Chng</div>
<div class="t" style="right:1203.2px;top:88.2px;line-height:14px;font-size:9.4px;color:#26b43c;">+6.09</div>
<div class="t" style="right:1054.9px;top:73.5px;line-height:14px;font-size:9.8px;color:#9c9c9c;letter-spacing:-0.2px;">Bid X</div>
<div class="t" style="right:1067.1px;top:88.2px;line-height:14px;font-size:9.4px;color:#e6e6e6;">121.46</div>
<div class="t" style="left:471.4px;top:88.2px;line-height:14px;font-size:9.8px;color:#e6e6e6;">U</div>
<div class="t" style="right:907px;top:73.5px;line-height:14px;font-size:9.8px;color:#9c9c9c;letter-spacing:-0.2px;">Ask X</div>
<div class="t" style="right:919.2px;top:88.2px;line-height:14px;font-size:9.4px;color:#e6e6e6;">121.50</div>
<div class="t" style="left:619.3px;top:88.2px;line-height:14px;font-size:9.8px;color:#e6e6e6;">P</div>
<div class="t" style="right:759.1px;top:73.5px;line-height:14px;font-size:9.8px;color:#9c9c9c;letter-spacing:-0.2px;">Size</div>
<div class="t" style="right:759.5px;top:88.2px;line-height:14px;font-size:9.4px;color:#e6e6e6;">1 x 91</div>
<div class="t" style="right:611.2px;top:73.5px;line-height:14px;font-size:9.8px;color:#9c9c9c;letter-spacing:-0.2px;">Volume</div>
<div class="t" style="right:611.6px;top:88.2px;line-height:14px;font-size:9.4px;color:#e6e6e6;">277,593,455</div>
<div class="t" style="right:463.3px;top:73.5px;line-height:14px;font-size:9.8px;color:#9c9c9c;letter-spacing:-0.2px;">Open</div>
<div class="t" style="right:463.7px;top:88.2px;line-height:14px;font-size:9.4px;color:#e6e6e6;">118.61</div>
<div class="t" style="right:315.4px;top:73.5px;line-height:14px;font-size:9.8px;color:#9c9c9c;letter-spacing:-0.2px;">High</div>
<div class="t" style="right:315.8px;top:88.2px;line-height:14px;font-size:9.4px;color:#e6e6e6;">121.88</div>
<div class="t" style="right:167.5px;top:73.5px;line-height:14px;font-size:9.8px;color:#9c9c9c;letter-spacing:-0.2px;">Low</div>
<div class="t" style="right:167.9px;top:88.2px;line-height:14px;font-size:9.4px;color:#e6e6e6;">118.15</div>
<div class="t" style="left:20.5px;top:103.6px;line-height:14px;font-size:10.3px;color:#d6d6d6;">Option Chain</div>
<div class="t" style="left:97px;top:103.6px;line-height:14px;font-size:10px;color:#8a8a8a;">Filter:</div>
<div class="t" style="left:125.5px;top:103.6px;line-height:14px;font-size:9.6px;color:#f2f2f2;font-weight:700;">Off</div>
<div class="t" style="left:156.5px;top:103.6px;line-height:14px;font-size:10px;color:#8a8a8a;">Spread:</div>
<div class="t" style="left:193.5px;top:103.6px;line-height:14px;font-size:9.9px;color:#f2f2f2;font-weight:700;letter-spacing:-0.35px;">Single</div>
<div class="t" style="left:238px;top:103.6px;line-height:14px;font-size:10px;color:#d6d6d6;">Volume, Open I...</div>
<div class="t" style="left:125.25px;width:400px;text-align:center;top:120.3px;line-height:14px;font-size:9.8px;color:#9a9a9a;letter-spacing:-0.3px;">CALLS</div>
<div class="t" style="left:1026px;width:400px;text-align:center;top:120.3px;line-height:14px;font-size:9.8px;color:#9a9a9a;letter-spacing:-0.3px;">PUTS</div>
<div class="t" style="right:1341px;top:137px;line-height:14px;font-size:10.4px;color:#e6e6e6;">Volume</div>
<div class="t" style="right:1196px;top:137px;line-height:14px;font-size:10.4px;color:#e6e6e6;">Open.Int</div>
<div class="t" style="right:1043px;top:137px;line-height:14px;font-size:9.8px;color:#8c8c8c;">Bid X</div>
<div class="t" style="right:898px;top:137px;line-height:14px;font-size:9.8px;color:#8c8c8c;">Ask X</div>
<div class="t" style="right:479px;top:137px;line-height:14px;font-size:9.8px;color:#8c8c8c;">Bid X</div>
<div class="t" style="right:334px;top:137px;line-height:14px;font-size:9.8px;color:#8c8c8c;">Ask X</div>
<div class="t" style="right:197px;top:137px;line-height:14px;font-size:10.4px;color:#e6e6e6;">Volume</div>
<div class="t" style="right:53px;top:137px;line-height:14px;font-size:10.4px;color:#e6e6e6;">Open.Int</div>
<div class="t" style="right:766.5px;top:120.5px;line-height:14px;font-size:9.8px;color:#e2e2e2;">Strikes:</div>
<div class="t" style="left:777px;top:121.3px;line-height:14px;font-size:9.6px;color:#f0f0f0;">ALL</div>
<div class="t" style="right:761.5px;top:137px;line-height:14px;font-size:9.8px;color:#e2e2e2;">Exp</div>
<div class="t" style="right:623.5px;top:137px;line-height:14px;font-size:9.8px;color:#e2e2e2;">Strike</div>
<div class="t" style="left:29px;top:154px;line-height:14px;font-size:9.8px;color:#d6d6d6;letter-spacing:-0.4px;">20 JUN 25</div>
<div class="t" style="left:88px;top:154px;line-height:14px;font-size:9.8px;color:#b5b5b5;">(96)</div>
<div class="t" style="left:115px;top:154px;line-height:14px;font-size:9.8px;color:#b5b5b5;">100</div>
<div class="t" style="right:1.5px;top:154px;line-height:14px;font-size:9.6px;color:#d6d6d6;letter-spacing:-0.25px;">57.31% (±29.352)</div>
<div class="t" style="right:1333.8px;top:172.9px;line-height:14px;font-size:9.6px;color:#dedede;">2,267</div>
<div class="t" style="right:1188.8px;top:172.9px;line-height:14px;font-size:9.6px;color:#dedede;">36,084</div>
<div class="t" style="right:1054.6px;top:172.9px;line-height:14px;font-size:9.6px;color:#dedede;">26.90</div>
<div class="t" style="left:484.6px;top:172.9px;line-height:14px;font-size:9.6px;color:#dedede;">C</div>
<div class="t" style="right:909.6px;top:172.9px;line-height:14px;font-size:9.6px;color:#dedede;">27.15</div>
<div class="t" style="left:629.6px;top:172.9px;line-height:14px;font-size:9.6px;color:#dedede;">B</div>
<div class="t" style="right:760.8px;top:172.9px;line-height:14px;font-size:9.6px;color:#dedede;letter-spacing:-0.33px;">20 JUN 25</div>
<div class="t" style="right:623.5px;top:172.9px;line-height:14px;font-size:9.6px;color:#dedede;">100</div>
<div class="t" style="right:491.1px;top:172.9px;line-height:14px;font-size:9.6px;color:#dedede;">4.10</div>
<div class="t" style="left:1047.3px;top:172.9px;line-height:14px;font-size:9.6px;color:#dedede;">Z</div>
<div class="t" style="right:346.1px;top:172.9px;line-height:14px;font-size:9.6px;color:#dedede;">4.20</div>
<div class="t" style="left:1192.3px;top:172.9px;line-height:14px;font-size:9.6px;color:#dedede;">N</div>
<div class="t" style="right:189.8px;top:172.9px;line-height:14px;font-size:9.6px;color:#dedede;">3,898</div>
<div class="t" style="right:45.8px;top:172.9px;line-height:14px;font-size:9.6px;color:#dedede;">88,631</div>
<div class="t" style="right:1333.8px;top:186.9px;line-height:14px;font-size:9.6px;color:#dedede;">46</div>
<div class="t" style="right:1188.8px;top:186.9px;line-height:14px;font-size:9.6px;color:#dedede;">7,631</div>
<div class="t" style="right:1054.6px;top:186.9px;line-height:14px;font-size:9.6px;color:#dedede;">26.15</div>
<div class="t" style="left:484.6px;top:186.9px;line-height:14px;font-size:9.6px;color:#dedede;">C</div>
<div class="t" style="right:909.6px;top:186.9px;line-height:14px;font-size:9.6px;color:#dedede;">27.85</div>
<div class="t" style="left:629.6px;top:186.9px;line-height:14px;font-size:9.6px;color:#dedede;">N</div>
<div class="t" style="right:760.8px;top:186.9px;line-height:14px;font-size:9.6px;color:#dedede;letter-spacing:-0.33px;">20 JUN 25</div>
<div class="t" style="right:623.5px;top:186.9px;line-height:14px;font-size:9.6px;color:#dedede;">101</div>
<div class="t" style="right:491.1px;top:186.9px;line-height:14px;font-size:9.6px;color:#dedede;">4.15</div>
<div class="t" style="left:1047.3px;top:186.9px;line-height:14px;font-size:9.6px;color:#dedede;">C</div>
<div class="t" style="right:346.1px;top:186.9px;line-height:14px;font-size:9.6px;color:#dedede;">4.45</div>
<div class="t" style="left:1192.3px;top:186.9px;line-height:14px;font-size:9.6px;color:#dedede;">P</div>
<div class="t" style="right:189.8px;top:186.9px;line-height:14px;font-size:9.6px;color:#dedede;">83</div>
<div class="t" style="right:45.8px;top:186.9px;line-height:14px;font-size:9.6px;color:#dedede;">8,662</div>
<div class="t" style="right:1333.8px;top:200.9px;line-height:14px;font-size:9.6px;color:#dedede;">7</div>
<div class="t" style="right:1188.8px;top:200.9px;line-height:14px;font-size:9.6px;color:#dedede;">3,952</div>
<div class="t" style="right:1054.6px;top:200.9px;line-height:14px;font-size:9.6px;color:#dedede;">25.40</div>
<div class="t" style="left:484.6px;top:200.9px;line-height:14px;font-size:9.6px;color:#dedede;">C</div>
<div class="t" style="right:909.6px;top:200.9px;line-height:14px;font-size:9.6px;color:#dedede;">27.25</div>
<div class="t" style="left:629.6px;top:200.9px;line-height:14px;font-size:9.6px;color:#dedede;">N</div>
<div class="t" style="right:760.8px;top:200.9px;line-height:14px;font-size:9.6px;color:#dedede;letter-spacing:-0.33px;">20 JUN 25</div>
<div class="t" style="right:623.5px;top:200.9px;line-height:14px;font-size:9.6px;color:#dedede;">102</div>
<div class="t" style="right:491.1px;top:200.9px;line-height:14px;font-size:9.6px;color:#dedede;">4.60</div>
<div class="t" style="left:1047.3px;top:200.9px;line-height:14px;font-size:9.6px;color:#dedede;">N</div>
<div class="t" style="right:346.1px;top:200.9px;line-height:14px;font-size:9.6px;color:#dedede;">4.70</div>
<div class="t" style="left:1192.3px;top:200.9px;line-height:14px;font-size:9.6px;color:#dedede;">N</div>
<div class="t" style="right:189.8px;top:200.9px;line-height:14px;font-size:9.6px;color:#dedede;">427</div>
<div class="t" style="right:45.8px;top:200.9px;line-height:14px;font-size:9.6px;color:#dedede;">6,774</div>
<div class="t" style="right:1333.8px;top:214.9px;line-height:14px;font-size:9.6px;color:#dedede;">31</div>
<div class="t" style="right:1188.8px;top:214.9px;line-height:14px;font-size:9.6px;color:#dedede;">1,792</div>
<div class="t" style="right:1054.6px;top:214.9px;line-height:14px;font-size:9.6px;color:#dedede;">24.65</div>
<div class="t" style="left:484.6px;top:214.9px;line-height:14px;font-size:9.6px;color:#dedede;">C</div>
<div class="t" style="right:909.6px;top:214.9px;line-height:14px;font-size:9.6px;color:#dedede;">26.50</div>
<div class="t" style="left:629.6px;top:214.9px;line-height:14px;font-size:9.6px;color:#dedede;">B</div>
<div class="t" style="right:760.8px;top:214.9px;line-height:14px;font-size:9.6px;color:#dedede;letter-spacing:-0.33px;">20 JUN 25</div>
<div class="t" style="right:623.5px;top:214.9px;line-height:14px;font-size:9.6px;color:#dedede;">103</div>
<div class="t" style="right:491.1px;top:214.9px;line-height:14px;font-size:9.6px;color:#dedede;">4.90</div>
<div class="t" style="left:1047.3px;top:214.9px;line-height:14px;font-size:9.6px;color:#dedede;">N</div>
<div class="t" style="right:346.1px;top:214.9px;line-height:14px;font-size:9.6px;color:#dedede;">5.00</div>
<div class="t" style="left:1192.3px;top:214.9px;line-height:14px;font-size:9.6px;color:#dedede;">C</div>
<div class="t" style="right:189.8px;top:214.9px;line-height:14px;font-size:9.6px;color:#dedede;">132</div>
<div class="t" style="right:45.8px;top:214.9px;line-height:14px;font-size:9.6px;color:#dedede;">6,763</div>
<div class="t" style="right:1333.8px;top:228.9px;line-height:14px;font-size:9.6px;color:#dedede;">864</div>
<div class="t" style="right:1188.8px;top:228.9px;line-height:14px;font-size:9.6px;color:#dedede;">4,244</div>
<div class="t" style="right:1054.6px;top:228.9px;line-height:14px;font-size:9.6px;color:#dedede;">23.95</div>
<div class="t" style="left:484.6px;top:228.9px;line-height:14px;font-size:9.6px;color:#dedede;">C</div>
<div class="t" style="right:909.6px;top:228.9px;line-height:14px;font-size:9.6px;color:#dedede;">24.25</div>
<div class="t" style="left:629.6px;top:228.9px;line-height:14px;font-size:9.6px;color:#dedede;">N</div>
<div class="t" style="right:760.8px;top:228.9px;line-height:14px;font-size:9.6px;color:#dedede;letter-spacing:-0.33px;">20 JUN 25</div>
<div class="t" style="right:623.5px;top:228.9px;line-height:14px;font-size:9.6px;color:#dedede;">104</div>
<div class="t" style="right:491.1px;top:228.9px;line-height:14px;font-size:9.6px;color:#dedede;">4.95</div>
<div class="t" style="left:1047.3px;top:228.9px;line-height:14px;font-size:9.6px;color:#dedede;">C</div>
<div class="t" style="right:346.1px;top:228.9px;line-height:14px;font-size:9.6px;color:#dedede;">5.25</div>
<div class="t" style="left:1192.3px;top:228.9px;line-height:14px;font-size:9.6px;color:#dedede;">N</div>
<div class="t" style="right:189.8px;top:228.9px;line-height:14px;font-size:9.6px;color:#dedede;">416</div>
<div class="t" style="right:45.8px;top:228.9px;line-height:14px;font-size:9.6px;color:#dedede;">8,884</div>
<div class="t" style="right:1333.8px;top:242.9px;line-height:14px;font-size:9.6px;color:#dedede;">458</div>
<div class="t" style="right:1188.8px;top:242.9px;line-height:14px;font-size:9.6px;color:#dedede;">15,632</div>
<div class="t" style="right:1054.6px;top:242.9px;line-height:14px;font-size:9.6px;color:#dedede;">23.30</div>
<div class="t" style="left:484.6px;top:242.9px;line-height:14px;font-size:9.6px;color:#dedede;">C</div>
<div class="t" style="right:909.6px;top:242.9px;line-height:14px;font-size:9.6px;color:#dedede;">25.00</div>
<div class="t" style="left:629.6px;top:242.9px;line-height:14px;font-size:9.6px;color:#dedede;">N</div>
<div class="t" style="right:760.8px;top:242.9px;line-height:14px;font-size:9.6px;color:#dedede;letter-spacing:-0.33px;">20 JUN 25</div>
<div class="t" style="right:623.5px;top:242.9px;line-height:14px;font-size:9.6px;color:#dedede;">105</div>
<div class="t" style="right:491.1px;top:242.9px;line-height:14px;font-size:9.6px;color:#dedede;">5.45</div>
<div class="t" style="left:1047.3px;top:242.9px;line-height:14px;font-size:9.6px;color:#dedede;">N</div>
<div class="t" style="right:346.1px;top:242.9px;line-height:14px;font-size:9.6px;color:#dedede;">5.55</div>
<div class="t" style="left:1192.3px;top:242.9px;line-height:14px;font-size:9.6px;color:#dedede;">N</div>
<div class="t" style="right:189.8px;top:242.9px;line-height:14px;font-size:9.6px;color:#dedede;">1,817</div>
<div class="t" style="right:45.8px;top:242.9px;line-height:14px;font-size:9.6px;color:#dedede;">37,356</div>
<div class="t" style="right:1333.8px;top:256.9px;line-height:14px;font-size:9.6px;color:#dedede;">53</div>
<div class="t" style="right:1188.8px;top:256.9px;line-height:14px;font-size:9.6px;color:#dedede;">3,327</div>
<div class="t" style="right:1054.6px;top:256.9px;line-height:14px;font-size:9.6px;color:#dedede;">22.60</div>
<div class="t" style="left:484.6px;top:256.9px;line-height:14px;font-size:9.6px;color:#dedede;">C</div>
<div class="t" style="right:909.6px;top:256.9px;line-height:14px;font-size:9.6px;color:#dedede;">23.25</div>
<div class="t" style="left:629.6px;top:256.9px;line-height:14px;font-size:9.6px;color:#dedede;">Z</div>
<div class="t" style="right:760.8px;top:256.9px;line-height:14px;font-size:9.6px;color:#dedede;letter-spacing:-0.33px;">20 JUN 25</div>
<div class="t" style="right:623.5px;top:256.9px;line-height:14px;font-size:9.6px;color:#dedede;">106</div>
<div class="t" style="right:491.1px;top:256.9px;line-height:14px;font-size:9.6px;color:#dedede;">5.55</div>
<div class="t" style="left:1047.3px;top:256.9px;line-height:14px;font-size:9.6px;color:#dedede;">C</div>
<div class="t" style="right:346.1px;top:256.9px;line-height:14px;font-size:9.6px;color:#dedede;">5.90</div>
<div class="t" style="left:1192.3px;top:256.9px;line-height:14px;font-size:9.6px;color:#dedede;">C</div>
<div class="t" style="right:189.8px;top:256.9px;line-height:14px;font-size:9.6px;color:#dedede;">62</div>
<div class="t" style="right:45.8px;top:256.9px;line-height:14px;font-size:9.6px;color:#dedede;">5,030</div>
<div class="t" style="right:1333.8px;top:270.9px;line-height:14px;font-size:9.6px;color:#dedede;">47</div>
<div class="t" style="right:1188.8px;top:270.9px;line-height:14px;font-size:9.6px;color:#dedede;">5,139</div>
<div class="t" style="right:1054.6px;top:270.9px;line-height:14px;font-size:9.6px;color:#dedede;">21.75</div>
<div class="t" style="left:484.6px;top:270.9px;line-height:14px;font-size:9.6px;color:#dedede;">B</div>
<div class="t" style="right:909.6px;top:270.9px;line-height:14px;font-size:9.6px;color:#dedede;">22.20</div>
<div class="t" style="left:629.6px;top:270.9px;line-height:14px;font-size:9.6px;color:#dedede;">N</div>
<div class="t" style="right:760.8px;top:270.9px;line-height:14px;font-size:9.6px;color:#dedede;letter-spacing:-0.33px;">20 JUN 25</div>
<div class="t" style="right:623.5px;top:270.9px;line-height:14px;font-size:9.6px;color:#dedede;">107</div>
<div class="t" style="right:491.1px;top:270.9px;line-height:14px;font-size:9.6px;color:#dedede;">6.10</div>
<div class="t" style="left:1047.3px;top:270.9px;line-height:14px;font-size:9.6px;color:#dedede;">N</div>
<div class="t" style="right:346.1px;top:270.9px;line-height:14px;font-size:9.6px;color:#dedede;">6.20</div>
<div class="t" style="left:1192.3px;top:270.9px;line-height:14px;font-size:9.6px;color:#dedede;">C</div>
<div class="t" style="right:189.8px;top:270.9px;line-height:14px;font-size:9.6px;color:#dedede;">162</div>
<div class="t" style="right:45.8px;top:270.9px;line-height:14px;font-size:9.6px;color:#dedede;">5,923</div>
<div class="t" style="right:1333.8px;top:284.9px;line-height:14px;font-size:9.6px;color:#dedede;">52</div>
<div class="t" style="right:1188.8px;top:284.9px;line-height:14px;font-size:9.6px;color:#dedede;">6,142</div>
<div class="t" style="right:1054.6px;top:284.9px;line-height:14px;font-size:9.6px;color:#dedede;">21.25</div>
<div class="t" style="left:484.6px;top:284.9px;line-height:14px;font-size:9.6px;color:#dedede;">D</div>
<div class="t" style="right:909.6px;top:284.9px;line-height:14px;font-size:9.6px;color:#dedede;">21.50</div>
<div class="t" style="left:629.6px;top:284.9px;line-height:14px;font-size:9.6px;color:#dedede;">N</div>
<div class="t" style="right:760.8px;top:284.9px;line-height:14px;font-size:9.6px;color:#dedede;letter-spacing:-0.33px;">20 JUN 25</div>
<div class="t" style="right:623.5px;top:284.9px;line-height:14px;font-size:9.6px;color:#dedede;">108</div>
<div class="t" style="right:491.1px;top:284.9px;line-height:14px;font-size:9.6px;color:#dedede;">6.40</div>
<div class="t" style="left:1047.3px;top:284.9px;line-height:14px;font-size:9.6px;color:#dedede;">N</div>
<div class="t" style="right:346.1px;top:284.9px;line-height:14px;font-size:9.6px;color:#dedede;">6.50</div>
<div class="t" style="left:1192.3px;top:284.9px;line-height:14px;font-size:9.6px;color:#dedede;">N</div>
<div class="t" style="right:189.8px;top:284.9px;line-height:14px;font-size:9.6px;color:#dedede;">72</div>
<div class="t" style="right:45.8px;top:284.9px;line-height:14px;font-size:9.6px;color:#dedede;">5,503</div>
<div class="t" style="right:1333.8px;top:298.9px;line-height:14px;font-size:9.6px;color:#dedede;">26</div>
<div class="t" style="right:1188.8px;top:298.9px;line-height:14px;font-size:9.6px;color:#dedede;">4,659</div>
<div class="t" style="right:1054.6px;top:298.9px;line-height:14px;font-size:9.6px;color:#dedede;">20.45</div>
<div class="t" style="left:484.6px;top:298.9px;line-height:14px;font-size:9.6px;color:#dedede;">B</div>
<div class="t" style="right:909.6px;top:298.9px;line-height:14px;font-size:9.6px;color:#dedede;">20.85</div>
<div class="t" style="left:629.6px;top:298.9px;line-height:14px;font-size:9.6px;color:#dedede;">N</div>
<div class="t" style="right:760.8px;top:298.9px;line-height:14px;font-size:9.6px;color:#dedede;letter-spacing:-0.33px;">20 JUN 25</div>
<div class="t" style="right:623.5px;top:298.9px;line-height:14px;font-size:9.6px;color:#dedede;">109</div>
<div class="t" style="right:491.1px;top:298.9px;line-height:14px;font-size:9.6px;color:#dedede;">6.60</div>
<div class="t" style="left:1047.3px;top:298.9px;line-height:14px;font-size:9.6px;color:#dedede;">N</div>
<div class="t" style="right:346.1px;top:298.9px;line-height:14px;font-size:9.6px;color:#dedede;">6.90</div>
<div class="t" style="left:1192.3px;top:298.9px;line-height:14px;font-size:9.6px;color:#dedede;">C</div>
<div class="t" style="right:189.8px;top:298.9px;line-height:14px;font-size:9.6px;color:#dedede;">70</div>
<div class="t" style="right:45.8px;top:298.9px;line-height:14px;font-size:9.6px;color:#dedede;">4,084</div>
<div class="t" style="right:1333.8px;top:312.9px;line-height:14px;font-size:9.6px;color:#dedede;">2,698</div>
<div class="t" style="right:1188.8px;top:312.9px;line-height:14px;font-size:9.6px;color:#dedede;">40,522</div>
<div class="t" style="right:1054.6px;top:312.9px;line-height:14px;font-size:9.6px;color:#dedede;">19.95</div>
<div class="t" style="left:484.6px;top:312.9px;line-height:14px;font-size:9.6px;color:#dedede;">N</div>
<div class="t" style="right:909.6px;top:312.9px;line-height:14px;font-size:9.6px;color:#dedede;">20.20</div>
<div class="t" style="left:629.6px;top:312.9px;line-height:14px;font-size:9.6px;color:#dedede;">N</div>
<div class="t" style="right:760.8px;top:312.9px;line-height:14px;font-size:9.6px;color:#dedede;letter-spacing:-0.33px;">20 JUN 25</div>
<div class="t" style="right:623.5px;top:312.9px;line-height:14px;font-size:9.6px;color:#dedede;">110</div>
<div class="t" style="right:491.1px;top:312.9px;line-height:14px;font-size:9.6px;color:#dedede;">7.05</div>
<div class="t" style="left:1047.3px;top:312.9px;line-height:14px;font-size:9.6px;color:#dedede;">N</div>
<div class="t" style="right:346.1px;top:312.9px;line-height:14px;font-size:9.6px;color:#dedede;">7.20</div>
<div class="t" style="left:1192.3px;top:312.9px;line-height:14px;font-size:9.6px;color:#dedede;">N</div>
<div class="t" style="right:189.8px;top:312.9px;line-height:14px;font-size:9.6px;color:#dedede;">992</div>
<div class="t" style="right:45.8px;top:312.9px;line-height:14px;font-size:9.6px;color:#dedede;">76,746</div>
<div class="t" style="right:1333.8px;top:326.9px;line-height:14px;font-size:9.6px;color:#dedede;">743</div>
<div class="t" style="right:1188.8px;top:326.9px;line-height:14px;font-size:9.6px;color:#dedede;">5,444</div>
<div class="t" style="right:1054.6px;top:326.9px;line-height:14px;font-size:9.6px;color:#dedede;">19.35</div>
<div class="t" style="left:484.6px;top:326.9px;line-height:14px;font-size:9.6px;color:#dedede;">C</div>
<div class="t" style="right:909.6px;top:326.9px;line-height:14px;font-size:9.6px;color:#dedede;">21.20</div>
<div class="t" style="left:629.6px;top:326.9px;line-height:14px;font-size:9.6px;color:#dedede;">A</div>
<div class="t" style="right:760.8px;top:326.9px;line-height:14px;font-size:9.6px;color:#dedede;letter-spacing:-0.33px;">20 JUN 25</div>
<div class="t" style="right:623.5px;top:326.9px;line-height:14px;font-size:9.6px;color:#dedede;">111</div>
<div class="t" style="right:491.1px;top:326.9px;line-height:14px;font-size:9.6px;color:#dedede;">7.45</div>
<div class="t" style="left:1047.3px;top:326.9px;line-height:14px;font-size:9.6px;color:#dedede;">N</div>
<div class="t" style="right:346.1px;top:326.9px;line-height:14px;font-size:9.6px;color:#dedede;">7.60</div>
<div class="t" style="left:1192.3px;top:326.9px;line-height:14px;font-size:9.6px;color:#dedede;">C</div>
<div class="t" style="right:189.8px;top:326.9px;line-height:14px;font-size:9.6px;color:#dedede;">95</div>
<div class="t" style="right:45.8px;top:326.9px;line-height:14px;font-size:9.6px;color:#dedede;">11,103</div>
<div class="t" style="right:1333.8px;top:340.9px;line-height:14px;font-size:9.6px;color:#dedede;">180</div>
<div class="t" style="right:1188.8px;top:340.9px;line-height:14px;font-size:9.6px;color:#dedede;">3,859</div>
<div class="t" style="right:1054.6px;top:340.9px;line-height:14px;font-size:9.6px;color:#dedede;">18.70</div>
<div class="t" style="left:484.6px;top:340.9px;line-height:14px;font-size:9.6px;color:#dedede;">N</div>
<div class="t" style="right:909.6px;top:340.9px;line-height:14px;font-size:9.6px;color:#dedede;">19.00</div>
<div class="t" style="left:629.6px;top:340.9px;line-height:14px;font-size:9.6px;color:#dedede;">N</div>
<div class="t" style="right:760.8px;top:340.9px;line-height:14px;font-size:9.6px;color:#dedede;letter-spacing:-0.33px;">20 JUN 25</div>
<div class="t" style="right:623.5px;top:340.9px;line-height:14px;font-size:9.6px;color:#dedede;">112</div>
<div class="t" style="right:491.1px;top:340.9px;line-height:14px;font-size:9.6px;color:#dedede;">7.85</div>
<div class="t" style="left:1047.3px;top:340.9px;line-height:14px;font-size:9.6px;color:#dedede;">N</div>
<div class="t" style="right:346.1px;top:340.9px;line-height:14px;font-size:9.6px;color:#dedede;">7.95</div>
<div class="t" style="left:1192.3px;top:340.9px;line-height:14px;font-size:9.6px;color:#dedede;">N</div>
<div class="t" style="right:189.8px;top:340.9px;line-height:14px;font-size:9.6px;color:#dedede;">97</div>
<div class="t" style="right:45.8px;top:340.9px;line-height:14px;font-size:9.6px;color:#dedede;">6,995</div>
<div class="t" style="right:1333.8px;top:354.9px;line-height:14px;font-size:9.6px;color:#dedede;">238</div>
<div class="t" style="right:1188.8px;top:354.9px;line-height:14px;font-size:9.6px;color:#dedede;">5,257</div>
<div class="t" style="right:1054.6px;top:354.9px;line-height:14px;font-size:9.6px;color:#dedede;">18.00</div>
<div class="t" style="left:484.6px;top:354.9px;line-height:14px;font-size:9.6px;color:#dedede;">C</div>
<div class="t" style="right:909.6px;top:354.9px;line-height:14px;font-size:9.6px;color:#dedede;">18.35</div>
<div class="t" style="left:629.6px;top:354.9px;line-height:14px;font-size:9.6px;color:#dedede;">A</div>
<div class="t" style="right:760.8px;top:354.9px;line-height:14px;font-size:9.6px;color:#dedede;letter-spacing:-0.33px;">20 JUN 25</div>
<div class="t" style="right:623.5px;top:354.9px;line-height:14px;font-size:9.6px;color:#dedede;">113</div>
<div class="t" style="right:491.1px;top:354.9px;line-height:14px;font-size:9.6px;color:#dedede;">7.95</div>
<div class="t" style="left:1047.3px;top:354.9px;line-height:14px;font-size:9.6px;color:#dedede;">B</div>
<div class="t" style="right:346.1px;top:354.9px;line-height:14px;font-size:9.6px;color:#dedede;">8.35</div>
<div class="t" style="left:1192.3px;top:354.9px;line-height:14px;font-size:9.6px;color:#dedede;">C</div>
<div class="t" style="right:189.8px;top:354.9px;line-height:14px;font-size:9.6px;color:#dedede;">103</div>
<div class="t" style="right:45.8px;top:354.9px;line-height:14px;font-size:9.6px;color:#dedede;">10,459</div>
<div class="t" style="right:1333.8px;top:368.9px;line-height:14px;font-size:9.6px;color:#dedede;">241</div>
<div class="t" style="right:1188.8px;top:368.9px;line-height:14px;font-size:9.6px;color:#dedede;">4,897</div>
<div class="t" style="right:1054.6px;top:368.9px;line-height:14px;font-size:9.6px;color:#dedede;">17.55</div>
<div class="t" style="left:484.6px;top:368.9px;line-height:14px;font-size:9.6px;color:#dedede;">C</div>
<div class="t" style="right:909.6px;top:368.9px;line-height:14px;font-size:9.6px;color:#dedede;">18.00</div>
<div class="t" style="left:629.6px;top:368.9px;line-height:14px;font-size:9.6px;color:#dedede;">Z</div>
<div class="t" style="right:760.8px;top:368.9px;line-height:14px;font-size:9.6px;color:#dedede;letter-spacing:-0.33px;">20 JUN 25</div>
<div class="t" style="right:623.5px;top:368.9px;line-height:14px;font-size:9.6px;color:#dedede;">114</div>
<div class="t" style="right:491.1px;top:368.9px;line-height:14px;font-size:9.6px;color:#dedede;">8.60</div>
<div class="t" style="left:1047.3px;top:368.9px;line-height:14px;font-size:9.6px;color:#dedede;">J</div>
<div class="t" style="right:346.1px;top:368.9px;line-height:14px;font-size:9.6px;color:#dedede;">8.75</div>
<div class="t" style="left:1192.3px;top:368.9px;line-height:14px;font-size:9.6px;color:#dedede;">N</div>
<div class="t" style="right:189.8px;top:368.9px;line-height:14px;font-size:9.6px;color:#dedede;">141</div>
<div class="t" style="right:45.8px;top:368.9px;line-height:14px;font-size:9.6px;color:#dedede;">8,125</div>
<div class="t" style="right:1333.8px;top:382.9px;line-height:14px;font-size:9.6px;color:#dedede;">1,099</div>
<div class="t" style="right:1188.8px;top:382.9px;line-height:14px;font-size:9.6px;color:#dedede;">27,120</div>
<div class="t" style="right:1054.6px;top:382.9px;line-height:14px;font-size:9.6px;color:#dedede;">16.80</div>
<div class="t" style="left:484.6px;top:382.9px;line-height:14px;font-size:9.6px;color:#dedede;">B</div>
<div class="t" style="right:909.6px;top:382.9px;line-height:14px;font-size:9.6px;color:#dedede;">17.20</div>
<div class="t" style="left:629.6px;top:382.9px;line-height:14px;font-size:9.6px;color:#dedede;">N</div>
<div class="t" style="right:760.8px;top:382.9px;line-height:14px;font-size:9.6px;color:#dedede;letter-spacing:-0.33px;">20 JUN 25</div>
<div class="t" style="right:623.5px;top:382.9px;line-height:14px;font-size:9.6px;color:#dedede;">115</div>
<div class="t" style="right:491.1px;top:382.9px;line-height:14px;font-size:9.6px;color:#dedede;">9.05</div>
<div class="t" style="left:1047.3px;top:382.9px;line-height:14px;font-size:9.6px;color:#dedede;">N</div>
<div class="t" style="right:346.1px;top:382.9px;line-height:14px;font-size:9.6px;color:#dedede;">9.20</div>
<div class="t" style="left:1192.3px;top:382.9px;line-height:14px;font-size:9.6px;color:#dedede;">N</div>
<div class="t" style="right:189.8px;top:382.9px;line-height:14px;font-size:9.6px;color:#dedede;">1,800</div>
<div class="t" style="right:45.8px;top:382.9px;line-height:14px;font-size:9.6px;color:#dedede;">34,728</div>
<div class="t" style="right:1333.8px;top:396.9px;line-height:14px;font-size:9.6px;color:#dedede;">384</div>
<div class="t" style="right:1188.8px;top:396.9px;line-height:14px;font-size:9.6px;color:#dedede;">3,778</div>
<div class="t" style="right:1054.6px;top:396.9px;line-height:14px;font-size:9.6px;color:#dedede;">16.25</div>
<div class="t" style="left:484.6px;top:396.9px;line-height:14px;font-size:9.6px;color:#dedede;">N</div>
<div class="t" style="right:909.6px;top:396.9px;line-height:14px;font-size:9.6px;color:#dedede;">16.80</div>
<div class="t" style="left:629.6px;top:396.9px;line-height:14px;font-size:9.6px;color:#dedede;">Z</div>
<div class="t" style="right:760.8px;top:396.9px;line-height:14px;font-size:9.6px;color:#dedede;letter-spacing:-0.33px;">20 JUN 25</div>
<div class="t" style="right:623.5px;top:396.9px;line-height:14px;font-size:9.6px;color:#dedede;">116</div>
<div class="t" style="right:491.1px;top:396.9px;line-height:14px;font-size:9.6px;color:#dedede;">9.45</div>
<div class="t" style="left:1047.3px;top:396.9px;line-height:14px;font-size:9.6px;color:#dedede;">N</div>
<div class="t" style="right:346.1px;top:396.9px;line-height:14px;font-size:9.6px;color:#dedede;">9.60</div>
<div class="t" style="left:1192.3px;top:396.9px;line-height:14px;font-size:9.6px;color:#dedede;">C</div>
<div class="t" style="right:189.8px;top:396.9px;line-height:14px;font-size:9.6px;color:#dedede;">325</div>
<div class="t" style="right:45.8px;top:396.9px;line-height:14px;font-size:9.6px;color:#dedede;">6,446</div>
<div class="t" style="right:1333.8px;top:410.9px;line-height:14px;font-size:9.6px;color:#dedede;">422</div>
<div class="t" style="right:1188.8px;top:410.9px;line-height:14px;font-size:9.6px;color:#dedede;">4,506</div>
<div class="t" style="right:1054.6px;top:410.9px;line-height:14px;font-size:9.6px;color:#dedede;">15.85</div>
<div class="t" style="left:484.6px;top:410.9px;line-height:14px;font-size:9.6px;color:#dedede;">C</div>
<div class="t" style="right:909.6px;top:410.9px;line-height:14px;font-size:9.6px;color:#dedede;">16.25</div>
<div class="t" style="left:629.6px;top:410.9px;line-height:14px;font-size:9.6px;color:#dedede;">Z</div>
<div class="t" style="right:760.8px;top:410.9px;line-height:14px;font-size:9.6px;color:#dedede;letter-spacing:-0.33px;">20 JUN 25</div>
<div class="t" style="right:623.5px;top:410.9px;line-height:14px;font-size:9.6px;color:#dedede;">117</div>
<div class="t" style="right:491.1px;top:410.9px;line-height:14px;font-size:9.6px;color:#dedede;">9.90</div>
<div class="t" style="left:1047.3px;top:410.9px;line-height:14px;font-size:9.6px;color:#dedede;">N</div>
<div class="t" style="right:346.1px;top:410.9px;line-height:14px;font-size:9.6px;color:#dedede;">10.05</div>
<div class="t" style="left:1192.3px;top:410.9px;line-height:14px;font-size:9.6px;color:#dedede;">C</div>
<div class="t" style="right:189.8px;top:410.9px;line-height:14px;font-size:9.6px;color:#dedede;">48</div>
<div class="t" style="right:45.8px;top:410.9px;line-height:14px;font-size:9.6px;color:#dedede;">7,488</div>
<div class="t" style="right:1333.8px;top:424.9px;line-height:14px;font-size:9.6px;color:#dedede;">633</div>
<div class="t" style="right:1188.8px;top:424.9px;line-height:14px;font-size:9.6px;color:#dedede;">6,928</div>
<div class="t" style="right:1054.6px;top:424.9px;line-height:14px;font-size:9.6px;color:#dedede;">15.30</div>
<div class="t" style="left:484.6px;top:424.9px;line-height:14px;font-size:9.6px;color:#dedede;">C</div>
<div class="t" style="right:909.6px;top:424.9px;line-height:14px;font-size:9.6px;color:#dedede;">15.60</div>
<div class="t" style="left:629.6px;top:424.9px;line-height:14px;font-size:9.6px;color:#dedede;">Z</div>
<div class="t" style="right:760.8px;top:424.9px;line-height:14px;font-size:9.6px;color:#dedede;letter-spacing:-0.33px;">20 JUN 25</div>
<div class="t" style="right:623.5px;top:424.9px;line-height:14px;font-size:9.6px;color:#dedede;">118</div>
<div class="t" style="right:491.1px;top:424.9px;line-height:14px;font-size:9.6px;color:#dedede;">8.85</div>
<div class="t" style="left:1047.3px;top:424.9px;line-height:14px;font-size:9.6px;color:#dedede;">N</div>
<div class="t" style="right:346.1px;top:424.9px;line-height:14px;font-size:9.6px;color:#dedede;">10.50</div>
<div class="t" style="left:1192.3px;top:424.9px;line-height:14px;font-size:9.6px;color:#dedede;">N</div>
<div class="t" style="right:189.8px;top:424.9px;line-height:14px;font-size:9.6px;color:#dedede;">180</div>
<div class="t" style="right:45.8px;top:424.9px;line-height:14px;font-size:9.6px;color:#dedede;">9,067</div>
<div class="t" style="right:1333.8px;top:438.9px;line-height:14px;font-size:9.6px;color:#dedede;">405</div>
<div class="t" style="right:1188.8px;top:438.9px;line-height:14px;font-size:9.6px;color:#dedede;">5,680</div>
<div class="t" style="right:1054.6px;top:438.9px;line-height:14px;font-size:9.6px;color:#dedede;">14.80</div>
<div class="t" style="left:484.6px;top:438.9px;line-height:14px;font-size:9.6px;color:#dedede;">C</div>
<div class="t" style="right:909.6px;top:438.9px;line-height:14px;font-size:9.6px;color:#dedede;">16.45</div>
<div class="t" style="left:629.6px;top:438.9px;line-height:14px;font-size:9.6px;color:#dedede;">N</div>
<div class="t" style="right:760.8px;top:438.9px;line-height:14px;font-size:9.6px;color:#dedede;letter-spacing:-0.33px;">20 JUN 25</div>
<div class="t" style="right:623.5px;top:438.9px;line-height:14px;font-size:9.6px;color:#dedede;">119</div>
<div class="t" style="right:491.1px;top:438.9px;line-height:14px;font-size:9.6px;color:#dedede;">9.30</div>
<div class="t" style="left:1047.3px;top:438.9px;line-height:14px;font-size:9.6px;color:#dedede;">N</div>
<div class="t" style="right:346.1px;top:438.9px;line-height:14px;font-size:9.6px;color:#dedede;">10.95</div>
<div class="t" style="left:1192.3px;top:438.9px;line-height:14px;font-size:9.6px;color:#dedede;">N</div>
<div class="t" style="right:189.8px;top:438.9px;line-height:14px;font-size:9.6px;color:#dedede;">126</div>
<div class="t" style="right:45.8px;top:438.9px;line-height:14px;font-size:9.6px;color:#dedede;">8,122</div>
<div class="t" style="right:1333.8px;top:452.9px;line-height:14px;font-size:9.6px;color:#dedede;">21,446</div>
<div class="t" style="right:1188.8px;top:452.9px;line-height:14px;font-size:9.6px;color:#dedede;">158,659</div>
<div class="t" style="right:1054.6px;top:452.9px;line-height:14px;font-size:9.6px;color:#dedede;">14.30</div>
<div class="t" style="left:484.6px;top:452.9px;line-height:14px;font-size:9.6px;color:#dedede;">N</div>
<div class="t" style="right:909.6px;top:452.9px;line-height:14px;font-size:9.6px;color:#dedede;">14.45</div>
<div class="t" style="left:629.6px;top:452.9px;line-height:14px;font-size:9.6px;color:#dedede;">N</div>
<div class="t" style="right:760.8px;top:452.9px;line-height:14px;font-size:9.6px;color:#dedede;letter-spacing:-0.33px;">20 JUN 25</div>
<div class="t" style="right:623.5px;top:452.9px;line-height:14px;font-size:9.6px;color:#dedede;">120</div>
<div class="t" style="right:491.1px;top:452.9px;line-height:14px;font-size:9.6px;color:#dedede;">11.30</div>
<div class="t" style="left:1047.3px;top:452.9px;line-height:14px;font-size:9.6px;color:#dedede;">N</div>
<div class="t" style="right:346.1px;top:452.9px;line-height:14px;font-size:9.6px;color:#dedede;">11.45</div>
<div class="t" style="left:1192.3px;top:452.9px;line-height:14px;font-size:9.6px;color:#dedede;">N</div>
<div class="t" style="right:189.8px;top:452.9px;line-height:14px;font-size:9.6px;color:#dedede;">4,518</div>
<div class="t" style="right:45.8px;top:452.9px;line-height:14px;font-size:9.6px;color:#dedede;">38,045</div>
<div class="t" style="right:1333.8px;top:466.9px;line-height:14px;font-size:9.6px;color:#dedede;">1,403</div>
<div class="t" style="right:1188.8px;top:466.9px;line-height:14px;font-size:9.6px;color:#dedede;">3,793</div>
<div class="t" style="right:1054.6px;top:466.9px;line-height:14px;font-size:9.6px;color:#dedede;">13.80</div>
<div class="t" style="left:484.6px;top:466.9px;line-height:14px;font-size:9.6px;color:#dedede;">N</div>
<div class="t" style="right:909.6px;top:466.9px;line-height:14px;font-size:9.6px;color:#dedede;">14.00</div>
<div class="t" style="left:629.6px;top:466.9px;line-height:14px;font-size:9.6px;color:#dedede;">N</div>
<div class="t" style="right:760.8px;top:466.9px;line-height:14px;font-size:9.6px;color:#dedede;letter-spacing:-0.33px;">20 JUN 25</div>
<div class="t" style="right:623.5px;top:466.9px;line-height:14px;font-size:9.6px;color:#dedede;">121</div>
<div class="t" style="right:491.1px;top:466.9px;line-height:14px;font-size:9.6px;color:#dedede;">11.80</div>
<div class="t" style="left:1047.3px;top:466.9px;line-height:14px;font-size:9.6px;color:#dedede;">N</div>
<div class="t" style="right:346.1px;top:466.9px;line-height:14px;font-size:9.6px;color:#dedede;">11.95</div>
<div class="t" style="left:1192.3px;top:466.9px;line-height:14px;font-size:9.6px;color:#dedede;">W</div>
<div class="t" style="right:189.8px;top:466.9px;line-height:14px;font-size:9.6px;color:#dedede;">209</div>
<div class="t" style="right:45.8px;top:466.9px;line-height:14px;font-size:9.6px;color:#dedede;">7,303</div>
<div class="t" style="right:1333.8px;top:480.9px;line-height:14px;font-size:9.6px;color:#dedede;">716</div>
<div class="t" style="right:1188.8px;top:480.9px;line-height:14px;font-size:9.6px;color:#dedede;">2,943</div>
<div class="t" style="right:1054.6px;top:480.9px;line-height:14px;font-size:9.6px;color:#dedede;">13.30</div>
<div class="t" style="left:484.6px;top:480.9px;line-height:14px;font-size:9.6px;color:#dedede;">N</div>
<div class="t" style="right:909.6px;top:480.9px;line-height:14px;font-size:9.6px;color:#dedede;">13.45</div>
<div class="t" style="left:629.6px;top:480.9px;line-height:14px;font-size:9.6px;color:#dedede;">N</div>
<div class="t" style="right:760.8px;top:480.9px;line-height:14px;font-size:9.6px;color:#dedede;letter-spacing:-0.33px;">20 JUN 25</div>
<div class="t" style="right:623.5px;top:480.9px;line-height:14px;font-size:9.6px;color:#dedede;">122</div>
<div class="t" style="right:491.1px;top:480.9px;line-height:14px;font-size:9.6px;color:#dedede;">12.10</div>
<div class="t" style="left:1047.3px;top:480.9px;line-height:14px;font-size:9.6px;color:#dedede;">B</div>
<div class="t" style="right:346.1px;top:480.9px;line-height:14px;font-size:9.6px;color:#dedede;">12.45</div>
<div class="t" style="left:1192.3px;top:480.9px;line-height:14px;font-size:9.6px;color:#dedede;">C</div>
<div class="t" style="right:189.8px;top:480.9px;line-height:14px;font-size:9.6px;color:#dedede;">92</div>
<div class="t" style="right:45.8px;top:480.9px;line-height:14px;font-size:9.6px;color:#dedede;">7,098</div>
<div class="t" style="right:1333.8px;top:494.9px;line-height:14px;font-size:9.6px;color:#dedede;">237</div>
<div class="t" style="right:1188.8px;top:494.9px;line-height:14px;font-size:9.6px;color:#dedede;">6,935</div>
<div class="t" style="right:1054.6px;top:494.9px;line-height:14px;font-size:9.6px;color:#dedede;">12.85</div>
<div class="t" style="left:484.6px;top:494.9px;line-height:14px;font-size:9.6px;color:#dedede;">N</div>
<div class="t" style="right:909.6px;top:494.9px;line-height:14px;font-size:9.6px;color:#dedede;">12.95</div>
<div class="t" style="left:629.6px;top:494.9px;line-height:14px;font-size:9.6px;color:#dedede;">N</div>
<div class="t" style="right:760.8px;top:494.9px;line-height:14px;font-size:9.6px;color:#dedede;letter-spacing:-0.33px;">20 JUN 25</div>
<div class="t" style="right:623.5px;top:494.9px;line-height:14px;font-size:9.6px;color:#dedede;">123</div>
<div class="t" style="right:491.1px;top:494.9px;line-height:14px;font-size:9.6px;color:#dedede;">12.60</div>
<div class="t" style="left:1047.3px;top:494.9px;line-height:14px;font-size:9.6px;color:#dedede;">B</div>
<div class="t" style="right:346.1px;top:494.9px;line-height:14px;font-size:9.6px;color:#dedede;">12.95</div>
<div class="t" style="left:1192.3px;top:494.9px;line-height:14px;font-size:9.6px;color:#dedede;">N</div>
<div class="t" style="right:189.8px;top:494.9px;line-height:14px;font-size:9.6px;color:#dedede;">889</div>
<div class="t" style="right:45.8px;top:494.9px;line-height:14px;font-size:9.6px;color:#dedede;">5,976</div>
<div class="t" style="right:1333.8px;top:508.9px;line-height:14px;font-size:9.6px;color:#dedede;">186</div>
<div class="t" style="right:1188.8px;top:508.9px;line-height:14px;font-size:9.6px;color:#dedede;">3,643</div>
<div class="t" style="right:1054.6px;top:508.9px;line-height:14px;font-size:9.6px;color:#dedede;">12.35</div>
<div class="t" style="left:484.6px;top:508.9px;line-height:14px;font-size:9.6px;color:#dedede;">N</div>
<div class="t" style="right:909.6px;top:508.9px;line-height:14px;font-size:9.6px;color:#dedede;">12.50</div>
<div class="t" style="left:629.6px;top:508.9px;line-height:14px;font-size:9.6px;color:#dedede;">N</div>
<div class="t" style="right:760.8px;top:508.9px;line-height:14px;font-size:9.6px;color:#dedede;letter-spacing:-0.33px;">20 JUN 25</div>
<div class="t" style="right:623.5px;top:508.9px;line-height:14px;font-size:9.6px;color:#dedede;">124</div>
<div class="t" style="right:491.1px;top:508.9px;line-height:14px;font-size:9.6px;color:#dedede;">13.35</div>
<div class="t" style="left:1047.3px;top:508.9px;line-height:14px;font-size:9.6px;color:#dedede;">N</div>
<div class="t" style="right:346.1px;top:508.9px;line-height:14px;font-size:9.6px;color:#dedede;">13.50</div>
<div class="t" style="left:1192.3px;top:508.9px;line-height:14px;font-size:9.6px;color:#dedede;">C</div>
<div class="t" style="right:189.8px;top:508.9px;line-height:14px;font-size:9.6px;color:#dedede;">7</div>
<div class="t" style="right:45.8px;top:508.9px;line-height:14px;font-size:9.6px;color:#dedede;">5,112</div>
<div class="t" style="right:1333.8px;top:522.9px;line-height:14px;font-size:9.6px;color:#dedede;">2,766</div>
<div class="t" style="right:1188.8px;top:522.9px;line-height:14px;font-size:9.6px;color:#dedede;">28,203</div>
<div class="t" style="right:1054.6px;top:522.9px;line-height:14px;font-size:9.6px;color:#dedede;">11.90</div>
<div class="t" style="left:484.6px;top:522.9px;line-height:14px;font-size:9.6px;color:#dedede;">N</div>
<div class="t" style="right:909.6px;top:522.9px;line-height:14px;font-size:9.6px;color:#dedede;">12.05</div>
<div class="t" style="left:629.6px;top:522.9px;line-height:14px;font-size:9.6px;color:#dedede;">N</div>
<div class="t" style="right:760.8px;top:522.9px;line-height:14px;font-size:9.6px;color:#dedede;letter-spacing:-0.33px;">20 JUN 25</div>
<div class="t" style="right:623.5px;top:522.9px;line-height:14px;font-size:9.6px;color:#dedede;">125</div>
<div class="t" style="right:491.1px;top:522.9px;line-height:14px;font-size:9.6px;color:#dedede;">13.90</div>
<div class="t" style="left:1047.3px;top:522.9px;line-height:14px;font-size:9.6px;color:#dedede;">N</div>
<div class="t" style="right:346.1px;top:522.9px;line-height:14px;font-size:9.6px;color:#dedede;">14.05</div>
<div class="t" style="left:1192.3px;top:522.9px;line-height:14px;font-size:9.6px;color:#dedede;">C</div>
<div class="t" style="right:189.8px;top:522.9px;line-height:14px;font-size:9.6px;color:#dedede;">219</div>
<div class="t" style="right:45.8px;top:522.9px;line-height:14px;font-size:9.6px;color:#dedede;">22,711</div>
<div class="t" style="right:1333.8px;top:536.9px;line-height:14px;font-size:9.6px;color:#dedede;">49</div>
<div class="t" style="right:1188.8px;top:536.9px;line-height:14px;font-size:9.6px;color:#dedede;">4,112</div>
<div class="t" style="right:1054.6px;top:536.9px;line-height:14px;font-size:9.6px;color:#dedede;">11.50</div>
<div class="t" style="left:484.6px;top:536.9px;line-height:14px;font-size:9.6px;color:#dedede;">N</div>
<div class="t" style="right:909.6px;top:536.9px;line-height:14px;font-size:9.6px;color:#dedede;">11.60</div>
<div class="t" style="left:629.6px;top:536.9px;line-height:14px;font-size:9.6px;color:#dedede;">N</div>
<div class="t" style="right:760.8px;top:536.9px;line-height:14px;font-size:9.6px;color:#dedede;letter-spacing:-0.33px;">20 JUN 25</div>
<div class="t" style="right:623.5px;top:536.9px;line-height:14px;font-size:9.6px;color:#dedede;">126</div>
<div class="t" style="right:491.1px;top:536.9px;line-height:14px;font-size:9.6px;color:#dedede;">14.45</div>
<div class="t" style="left:1047.3px;top:536.9px;line-height:14px;font-size:9.6px;color:#dedede;">N</div>
<div class="t" style="right:346.1px;top:536.9px;line-height:14px;font-size:9.6px;color:#dedede;">14.60</div>
<div class="t" style="left:1192.3px;top:536.9px;line-height:14px;font-size:9.6px;color:#dedede;">N</div>
<div class="t" style="right:189.8px;top:536.9px;line-height:14px;font-size:9.6px;color:#dedede;">21</div>
<div class="t" style="right:45.8px;top:536.9px;line-height:14px;font-size:9.6px;color:#dedede;">3,530</div>
<div class="t" style="right:1333.8px;top:550.9px;line-height:14px;font-size:9.6px;color:#dedede;">360</div>
<div class="t" style="right:1188.8px;top:550.9px;line-height:14px;font-size:9.6px;color:#dedede;">3,221</div>
<div class="t" style="right:1054.6px;top:550.9px;line-height:14px;font-size:9.6px;color:#dedede;">11.05</div>
<div class="t" style="left:484.6px;top:550.9px;line-height:14px;font-size:9.6px;color:#dedede;">C</div>
<div class="t" style="right:909.6px;top:550.9px;line-height:14px;font-size:9.6px;color:#dedede;">12.95</div>
<div class="t" style="left:629.6px;top:550.9px;line-height:14px;font-size:9.6px;color:#dedede;">N</div>
<div class="t" style="right:760.8px;top:550.9px;line-height:14px;font-size:9.6px;color:#dedede;letter-spacing:-0.33px;">20 JUN 25</div>
<div class="t" style="right:623.5px;top:550.9px;line-height:14px;font-size:9.6px;color:#dedede;">127</div>
<div class="t" style="right:491.1px;top:550.9px;line-height:14px;font-size:9.6px;color:#dedede;">13.30</div>
<div class="t" style="left:1047.3px;top:550.9px;line-height:14px;font-size:9.6px;color:#dedede;">N</div>
<div class="t" style="right:346.1px;top:550.9px;line-height:14px;font-size:9.6px;color:#dedede;">15.15</div>
<div class="t" style="left:1192.3px;top:550.9px;line-height:14px;font-size:9.6px;color:#dedede;">N</div>
<div class="t" style="right:189.8px;top:550.9px;line-height:14px;font-size:9.6px;color:#dedede;">16</div>
<div class="t" style="right:45.8px;top:550.9px;line-height:14px;font-size:9.6px;color:#dedede;">3,541</div>
<div class="t" style="right:1333.8px;top:564.9px;line-height:14px;font-size:9.6px;color:#dedede;">154</div>
<div class="t" style="right:1188.8px;top:564.9px;line-height:14px;font-size:9.6px;color:#dedede;">5,137</div>
<div class="t" style="right:1054.6px;top:564.9px;line-height:14px;font-size:9.6px;color:#dedede;">10.65</div>
<div class="t" style="left:484.6px;top:564.9px;line-height:14px;font-size:9.6px;color:#dedede;">N</div>
<div class="t" style="right:909.6px;top:564.9px;line-height:14px;font-size:9.6px;color:#dedede;">11.55</div>
<div class="t" style="left:629.6px;top:564.9px;line-height:14px;font-size:9.6px;color:#dedede;">H</div>
<div class="t" style="right:760.8px;top:564.9px;line-height:14px;font-size:9.6px;color:#dedede;letter-spacing:-0.33px;">20 JUN 25</div>
<div class="t" style="right:623.5px;top:564.9px;line-height:14px;font-size:9.6px;color:#dedede;">128</div>
<div class="t" style="right:491.1px;top:564.9px;line-height:14px;font-size:9.6px;color:#dedede;">15.60</div>
<div class="t" style="left:1047.3px;top:564.9px;line-height:14px;font-size:9.6px;color:#dedede;">N</div>
<div class="t" style="right:346.1px;top:564.9px;line-height:14px;font-size:9.6px;color:#dedede;">15.75</div>
<div class="t" style="left:1192.3px;top:564.9px;line-height:14px;font-size:9.6px;color:#dedede;">N</div>
<div class="t" style="right:189.8px;top:564.9px;line-height:14px;font-size:9.6px;color:#dedede;">50</div>
<div class="t" style="right:45.8px;top:564.9px;line-height:14px;font-size:9.6px;color:#dedede;">5,482</div>
<div class="t" style="right:1333.8px;top:578.9px;line-height:14px;font-size:9.6px;color:#dedede;">748</div>
<div class="t" style="right:1188.8px;top:578.9px;line-height:14px;font-size:9.6px;color:#dedede;">3,626</div>
<div class="t" style="right:1054.6px;top:578.9px;line-height:14px;font-size:9.6px;color:#dedede;">10.25</div>
<div class="t" style="left:484.6px;top:578.9px;line-height:14px;font-size:9.6px;color:#dedede;">N</div>
<div class="t" style="right:909.6px;top:578.9px;line-height:14px;font-size:9.6px;color:#dedede;">10.35</div>
<div class="t" style="left:629.6px;top:578.9px;line-height:14px;font-size:9.6px;color:#dedede;">N</div>
<div class="t" style="right:760.8px;top:578.9px;line-height:14px;font-size:9.6px;color:#dedede;letter-spacing:-0.33px;">20 JUN 25</div>
<div class="t" style="right:623.5px;top:578.9px;line-height:14px;font-size:9.6px;color:#dedede;">129</div>
<div class="t" style="right:491.1px;top:578.9px;line-height:14px;font-size:9.6px;color:#dedede;">14.50</div>
<div class="t" style="left:1047.3px;top:578.9px;line-height:14px;font-size:9.6px;color:#dedede;">N</div>
<div class="t" style="right:346.1px;top:578.9px;line-height:14px;font-size:9.6px;color:#dedede;">16.45</div>
<div class="t" style="left:1192.3px;top:578.9px;line-height:14px;font-size:9.6px;color:#dedede;">C</div>
<div class="t" style="right:189.8px;top:578.9px;line-height:14px;font-size:9.6px;color:#dedede;">10</div>
<div class="t" style="right:45.8px;top:578.9px;line-height:14px;font-size:9.6px;color:#dedede;">3,220</div>
<div class="t" style="right:1333.8px;top:592.9px;line-height:14px;font-size:9.6px;color:#dedede;">8,061</div>
<div class="t" style="right:1188.8px;top:592.9px;line-height:14px;font-size:9.6px;color:#dedede;">55,631</div>
<div class="t" style="right:1054.6px;top:592.9px;line-height:14px;font-size:9.6px;color:#dedede;">9.85</div>
<div class="t" style="left:484.6px;top:592.9px;line-height:14px;font-size:9.6px;color:#dedede;">C</div>
<div class="t" style="right:909.6px;top:592.9px;line-height:14px;font-size:9.6px;color:#dedede;">10.05</div>
<div class="t" style="left:629.6px;top:592.9px;line-height:14px;font-size:9.6px;color:#dedede;">B</div>
<div class="t" style="right:760.8px;top:592.9px;line-height:14px;font-size:9.6px;color:#dedede;letter-spacing:-0.33px;">20 JUN 25</div>
<div class="t" style="right:623.5px;top:592.9px;line-height:14px;font-size:9.6px;color:#dedede;">130</div>
<div class="t" style="right:491.1px;top:592.9px;line-height:14px;font-size:9.6px;color:#dedede;">16.80</div>
<div class="t" style="left:1047.3px;top:592.9px;line-height:14px;font-size:9.6px;color:#dedede;">N</div>
<div class="t" style="right:346.1px;top:592.9px;line-height:14px;font-size:9.6px;color:#dedede;">16.95</div>
<div class="t" style="left:1192.3px;top:592.9px;line-height:14px;font-size:9.6px;color:#dedede;">N</div>
<div class="t" style="right:189.8px;top:592.9px;line-height:14px;font-size:9.6px;color:#dedede;">674</div>
<div class="t" style="right:45.8px;top:592.9px;line-height:14px;font-size:9.6px;color:#dedede;">39,265</div>
<div class="t" style="right:1333.8px;top:606.9px;line-height:14px;font-size:9.6px;color:#dedede;">652</div>
<div class="t" style="right:1188.8px;top:606.9px;line-height:14px;font-size:9.6px;color:#dedede;">5,477</div>
<div class="t" style="right:1054.6px;top:606.9px;line-height:14px;font-size:9.6px;color:#dedede;">9.10</div>
<div class="t" style="left:484.6px;top:606.9px;line-height:14px;font-size:9.6px;color:#dedede;">I</div>
<div class="t" style="right:909.6px;top:606.9px;line-height:14px;font-size:9.6px;color:#dedede;">9.25</div>
<div class="t" style="left:629.6px;top:606.9px;line-height:14px;font-size:9.6px;color:#dedede;">N</div>
<div class="t" style="right:760.8px;top:606.9px;line-height:14px;font-size:9.6px;color:#dedede;letter-spacing:-0.33px;">20 JUN 25</div>
<div class="t" style="right:623.5px;top:606.9px;line-height:14px;font-size:9.6px;color:#dedede;">132</div>
<div class="t" style="right:491.1px;top:606.9px;line-height:14px;font-size:9.6px;color:#dedede;">17.70</div>
<div class="t" style="left:1047.3px;top:606.9px;line-height:14px;font-size:9.6px;color:#dedede;">N</div>
<div class="t" style="right:346.1px;top:606.9px;line-height:14px;font-size:9.6px;color:#dedede;">18.55</div>
<div class="t" style="left:1192.3px;top:606.9px;line-height:14px;font-size:9.6px;color:#dedede;">C</div>
<div class="t" style="right:189.8px;top:606.9px;line-height:14px;font-size:9.6px;color:#dedede;">241</div>
<div class="t" style="right:45.8px;top:606.9px;line-height:14px;font-size:9.6px;color:#dedede;">4,334</div>
<div class="t" style="right:1333.8px;top:620.9px;line-height:14px;font-size:9.6px;color:#dedede;">892</div>
<div class="t" style="right:1188.8px;top:620.9px;line-height:14px;font-size:9.6px;color:#dedede;">6,931</div>
<div class="t" style="right:1054.6px;top:620.9px;line-height:14px;font-size:9.6px;color:#dedede;">8.30</div>
<div class="t" style="left:484.6px;top:620.9px;line-height:14px;font-size:9.6px;color:#dedede;">W</div>
<div class="t" style="right:909.6px;top:620.9px;line-height:14px;font-size:9.6px;color:#dedede;">8.55</div>
<div class="t" style="left:629.6px;top:620.9px;line-height:14px;font-size:9.6px;color:#dedede;">A</div>
<div class="t" style="right:760.8px;top:620.9px;line-height:14px;font-size:9.6px;color:#dedede;letter-spacing:-0.33px;">20 JUN 25</div>
<div class="t" style="right:623.5px;top:620.9px;line-height:14px;font-size:9.6px;color:#dedede;">134</div>
<div class="t" style="right:491.1px;top:620.9px;line-height:14px;font-size:9.6px;color:#dedede;">17.70</div>
<div class="t" style="left:1047.3px;top:620.9px;line-height:14px;font-size:9.6px;color:#dedede;">N</div>
<div class="t" style="right:346.1px;top:620.9px;line-height:14px;font-size:9.6px;color:#dedede;">19.50</div>
<div class="t" style="left:1192.3px;top:620.9px;line-height:14px;font-size:9.6px;color:#dedede;">N</div>
<div class="t" style="right:189.8px;top:620.9px;line-height:14px;font-size:9.6px;color:#dedede;">66</div>
<div class="t" style="right:45.8px;top:620.9px;line-height:14px;font-size:9.6px;color:#dedede;">3,803</div>
<div class="t" style="right:1333.8px;top:634.9px;line-height:14px;font-size:9.6px;color:#dedede;">2,623</div>
<div class="t" style="right:1188.8px;top:634.9px;line-height:14px;font-size:9.6px;color:#dedede;">27,808</div>
<div class="t" style="right:1054.6px;top:634.9px;line-height:14px;font-size:9.6px;color:#dedede;">8.10</div>
<div class="t" style="left:484.6px;top:634.9px;line-height:14px;font-size:9.6px;color:#dedede;">N</div>
<div class="t" style="right:909.6px;top:634.9px;line-height:14px;font-size:9.6px;color:#dedede;">8.20</div>
<div class="t" style="left:629.6px;top:634.9px;line-height:14px;font-size:9.6px;color:#dedede;">N</div>
<div class="t" style="right:760.8px;top:634.9px;line-height:14px;font-size:9.6px;color:#dedede;letter-spacing:-0.33px;">20 JUN 25</div>
<div class="t" style="right:623.5px;top:634.9px;line-height:14px;font-size:9.6px;color:#dedede;">135</div>
<div class="t" style="right:491.1px;top:634.9px;line-height:14px;font-size:9.6px;color:#dedede;">19.90</div>
<div class="t" style="left:1047.3px;top:634.9px;line-height:14px;font-size:9.6px;color:#dedede;">N</div>
<div class="t" style="right:346.1px;top:634.9px;line-height:14px;font-size:9.6px;color:#dedede;">20.20</div>
<div class="t" style="left:1192.3px;top:634.9px;line-height:14px;font-size:9.6px;color:#dedede;">N</div>
<div class="t" style="right:189.8px;top:634.9px;line-height:14px;font-size:9.6px;color:#dedede;">2,257</div>
<div class="t" style="right:45.8px;top:634.9px;line-height:14px;font-size:9.6px;color:#dedede;">14,748</div>
<div class="t" style="right:1333.8px;top:648.9px;line-height:14px;font-size:9.6px;color:#dedede;">437</div>
<div class="t" style="right:1188.8px;top:648.9px;line-height:14px;font-size:9.6px;color:#dedede;">9,042</div>
<div class="t" style="right:1054.6px;top:648.9px;line-height:14px;font-size:9.6px;color:#dedede;">7.75</div>
<div class="t" style="left:484.6px;top:648.9px;line-height:14px;font-size:9.6px;color:#dedede;">C</div>
<div class="t" style="right:909.6px;top:648.9px;line-height:14px;font-size:9.6px;color:#dedede;">7.90</div>
<div class="t" style="left:629.6px;top:648.9px;line-height:14px;font-size:9.6px;color:#dedede;">A</div>
<div class="t" style="right:760.8px;top:648.9px;line-height:14px;font-size:9.6px;color:#dedede;letter-spacing:-0.33px;">20 JUN 25</div>
<div class="t" style="right:623.5px;top:648.9px;line-height:14px;font-size:9.6px;color:#dedede;">136</div>
<div class="t" style="right:491.1px;top:648.9px;line-height:14px;font-size:9.6px;color:#dedede;">20.55</div>
<div class="t" style="left:1047.3px;top:648.9px;line-height:14px;font-size:9.6px;color:#dedede;">N</div>
<div class="t" style="right:346.1px;top:648.9px;line-height:14px;font-size:9.6px;color:#dedede;">20.95</div>
<div class="t" style="left:1192.3px;top:648.9px;line-height:14px;font-size:9.6px;color:#dedede;">C</div>
<div class="t" style="right:189.8px;top:648.9px;line-height:14px;font-size:9.6px;color:#dedede;">62</div>
<div class="t" style="right:45.8px;top:648.9px;line-height:14px;font-size:9.6px;color:#dedede;">3,889</div>
<div class="t" style="right:1333.8px;top:662.9px;line-height:14px;font-size:9.6px;color:#dedede;">777</div>
<div class="t" style="right:1188.8px;top:662.9px;line-height:14px;font-size:9.6px;color:#dedede;">8,418</div>
<div class="t" style="right:1054.6px;top:662.9px;line-height:14px;font-size:9.6px;color:#dedede;">7.50</div>
<div class="t" style="left:484.6px;top:662.9px;line-height:14px;font-size:9.6px;color:#dedede;">X</div>
<div class="t" style="right:909.6px;top:662.9px;line-height:14px;font-size:9.6px;color:#dedede;">7.55</div>
<div class="t" style="left:629.6px;top:662.9px;line-height:14px;font-size:9.6px;color:#dedede;">N</div>
<div class="t" style="right:760.8px;top:662.9px;line-height:14px;font-size:9.6px;color:#dedede;letter-spacing:-0.33px;">20 JUN 25</div>
<div class="t" style="right:623.5px;top:662.9px;line-height:14px;font-size:9.6px;color:#dedede;">137</div>
<div class="t" style="right:491.1px;top:662.9px;line-height:14px;font-size:9.6px;color:#dedede;">21.15</div>
<div class="t" style="left:1047.3px;top:662.9px;line-height:14px;font-size:9.6px;color:#dedede;">N</div>
<div class="t" style="right:346.1px;top:662.9px;line-height:14px;font-size:9.6px;color:#dedede;">21.75</div>
<div class="t" style="left:1192.3px;top:662.9px;line-height:14px;font-size:9.6px;color:#dedede;">W</div>
<div class="t" style="right:189.8px;top:662.9px;line-height:14px;font-size:9.6px;color:#dedede;">8</div>
<div class="t" style="right:45.8px;top:662.9px;line-height:14px;font-size:9.6px;color:#dedede;">4,089</div>
<div class="t" style="right:1333.8px;top:676.9px;line-height:14px;font-size:9.6px;color:#dedede;">196</div>
<div class="t" style="right:1188.8px;top:676.9px;line-height:14px;font-size:9.6px;color:#dedede;">6,922</div>
<div class="t" style="right:1054.6px;top:676.9px;line-height:14px;font-size:9.6px;color:#dedede;">7.15</div>
<div class="t" style="left:484.6px;top:676.9px;line-height:14px;font-size:9.6px;color:#dedede;">C</div>
<div class="t" style="right:909.6px;top:676.9px;line-height:14px;font-size:9.6px;color:#dedede;">7.30</div>
<div class="t" style="left:629.6px;top:676.9px;line-height:14px;font-size:9.6px;color:#dedede;">N</div>
<div class="t" style="right:760.8px;top:676.9px;line-height:14px;font-size:9.6px;color:#dedede;letter-spacing:-0.33px;">20 JUN 25</div>
<div class="t" style="right:623.5px;top:676.9px;line-height:14px;font-size:9.6px;color:#dedede;">138</div>
<div class="t" style="right:491.1px;top:676.9px;line-height:14px;font-size:9.6px;color:#dedede;">22.05</div>
<div class="t" style="left:1047.3px;top:676.9px;line-height:14px;font-size:9.6px;color:#dedede;">I</div>
<div class="t" style="right:346.1px;top:676.9px;line-height:14px;font-size:9.6px;color:#dedede;">22.40</div>
<div class="t" style="left:1192.3px;top:676.9px;line-height:14px;font-size:9.6px;color:#dedede;">D</div>
<div class="t" style="right:189.8px;top:676.9px;line-height:14px;font-size:9.6px;color:#dedede;">8</div>
<div class="t" style="right:45.8px;top:676.9px;line-height:14px;font-size:9.6px;color:#dedede;">9,081</div>
<div class="t" style="right:1333.8px;top:690.9px;line-height:14px;font-size:9.6px;color:#dedede;">103</div>
<div class="t" style="right:1188.8px;top:690.9px;line-height:14px;font-size:9.6px;color:#dedede;">18,590</div>
<div class="t" style="right:1054.6px;top:690.9px;line-height:14px;font-size:9.6px;color:#dedede;">6.90</div>
<div class="t" style="left:484.6px;top:690.9px;line-height:14px;font-size:9.6px;color:#dedede;">N</div>
<div class="t" style="right:909.6px;top:690.9px;line-height:14px;font-size:9.6px;color:#dedede;">8.80</div>
<div class="t" style="left:629.6px;top:690.9px;line-height:14px;font-size:9.6px;color:#dedede;">A</div>
<div class="t" style="right:760.8px;top:690.9px;line-height:14px;font-size:9.6px;color:#dedede;letter-spacing:-0.33px;">20 JUN 25</div>
<div class="t" style="right:623.5px;top:690.9px;line-height:14px;font-size:9.6px;color:#dedede;">139</div>
<div class="t" style="right:491.1px;top:690.9px;line-height:14px;font-size:9.6px;color:#dedede;">21.20</div>
<div class="t" style="left:1047.3px;top:690.9px;line-height:14px;font-size:9.6px;color:#dedede;">N</div>
<div class="t" style="right:346.1px;top:690.9px;line-height:14px;font-size:9.6px;color:#dedede;">23.10</div>
<div class="t" style="left:1192.3px;top:690.9px;line-height:14px;font-size:9.6px;color:#dedede;">C</div>
<div class="t" style="right:189.8px;top:690.9px;line-height:14px;font-size:9.6px;color:#dedede;">9</div>
<div class="t" style="right:45.8px;top:690.9px;line-height:14px;font-size:9.6px;color:#dedede;">2,464</div>
<div class="t" style="right:1333.8px;top:704.9px;line-height:14px;font-size:9.6px;color:#dedede;">8,961</div>
<div class="t" style="right:1188.8px;top:704.9px;line-height:14px;font-size:9.6px;color:#dedede;">64,423</div>
<div class="t" style="right:1054.6px;top:704.9px;line-height:14px;font-size:9.6px;color:#dedede;">6.60</div>
<div class="t" style="left:484.6px;top:704.9px;line-height:14px;font-size:9.6px;color:#dedede;">C</div>
<div class="t" style="right:909.6px;top:704.9px;line-height:14px;font-size:9.6px;color:#dedede;">6.75</div>
<div class="t" style="left:629.6px;top:704.9px;line-height:14px;font-size:9.6px;color:#dedede;">N</div>
<div class="t" style="right:760.8px;top:704.9px;line-height:14px;font-size:9.6px;color:#dedede;letter-spacing:-0.33px;">20 JUN 25</div>
<div class="t" style="right:623.5px;top:704.9px;line-height:14px;font-size:9.6px;color:#dedede;">140</div>
<div class="t" style="right:491.1px;top:704.9px;line-height:14px;font-size:9.6px;color:#dedede;">23.35</div>
<div class="t" style="left:1047.3px;top:704.9px;line-height:14px;font-size:9.6px;color:#dedede;">D</div>
<div class="t" style="right:346.1px;top:704.9px;line-height:14px;font-size:9.6px;color:#dedede;">23.85</div>
<div class="t" style="left:1192.3px;top:704.9px;line-height:14px;font-size:9.6px;color:#dedede;">C</div>
<div class="t" style="right:189.8px;top:704.9px;line-height:14px;font-size:9.6px;color:#dedede;">63</div>
<div class="t" style="right:45.8px;top:704.9px;line-height:14px;font-size:9.6px;color:#dedede;">15,889</div>
<div class="t" style="right:1333.8px;top:718.9px;line-height:14px;font-size:9.6px;color:#dedede;">324</div>
<div class="t" style="right:1188.8px;top:718.9px;line-height:14px;font-size:9.6px;color:#dedede;">4,372</div>
<div class="t" style="right:1054.6px;top:718.9px;line-height:14px;font-size:9.6px;color:#dedede;">6.25</div>
<div class="t" style="left:484.6px;top:718.9px;line-height:14px;font-size:9.6px;color:#dedede;">W</div>
<div class="t" style="right:909.6px;top:718.9px;line-height:14px;font-size:9.6px;color:#dedede;">6.45</div>
<div class="t" style="left:629.6px;top:718.9px;line-height:14px;font-size:9.6px;color:#dedede;">N</div>
<div class="t" style="right:760.8px;top:718.9px;line-height:14px;font-size:9.6px;color:#dedede;letter-spacing:-0.33px;">20 JUN 25</div>
<div class="t" style="right:623.5px;top:718.9px;line-height:14px;font-size:9.6px;color:#dedede;">141</div>
<div class="t" style="right:491.1px;top:718.9px;line-height:14px;font-size:9.6px;color:#dedede;">22.65</div>
<div class="t" style="left:1047.3px;top:718.9px;line-height:14px;font-size:9.6px;color:#dedede;">A</div>
<div class="t" style="right:346.1px;top:718.9px;line-height:14px;font-size:9.6px;color:#dedede;">24.60</div>
<div class="t" style="left:1192.3px;top:718.9px;line-height:14px;font-size:9.6px;color:#dedede;">X</div>
<div class="t" style="right:189.8px;top:718.9px;line-height:14px;font-size:9.6px;color:#dedede;">5</div>
<div class="t" style="right:45.8px;top:718.9px;line-height:14px;font-size:9.6px;color:#dedede;">2,308</div>
<div class="t" style="right:1333.8px;top:732.9px;line-height:14px;font-size:9.6px;color:#dedede;">213</div>
<div class="t" style="right:1188.8px;top:732.9px;line-height:14px;font-size:9.6px;color:#dedede;">6,053</div>
<div class="t" style="right:1054.6px;top:732.9px;line-height:14px;font-size:9.6px;color:#dedede;">6.10</div>
<div class="t" style="left:484.6px;top:732.9px;line-height:14px;font-size:9.6px;color:#dedede;">N</div>
<div class="t" style="right:909.6px;top:732.9px;line-height:14px;font-size:9.6px;color:#dedede;">6.20</div>
<div class="t" style="left:629.6px;top:732.9px;line-height:14px;font-size:9.6px;color:#dedede;">P</div>
<div class="t" style="right:760.8px;top:732.9px;line-height:14px;font-size:9.6px;color:#dedede;letter-spacing:-0.33px;">20 JUN 25</div>
<div class="t" style="right:623.5px;top:732.9px;line-height:14px;font-size:9.6px;color:#dedede;">142</div>
<div class="t" style="right:491.1px;top:732.9px;line-height:14px;font-size:9.6px;color:#dedede;">24.80</div>
<div class="t" style="left:1047.3px;top:732.9px;line-height:14px;font-size:9.6px;color:#dedede;">N</div>
<div class="t" style="right:346.1px;top:732.9px;line-height:14px;font-size:9.6px;color:#dedede;">25.30</div>
<div class="t" style="left:1192.3px;top:732.9px;line-height:14px;font-size:9.6px;color:#dedede;">N</div>
<div class="t" style="right:189.8px;top:732.9px;line-height:14px;font-size:9.6px;color:#dedede;">1</div>
<div class="t" style="right:45.8px;top:732.9px;line-height:14px;font-size:9.6px;color:#dedede;">2,738</div>
<div class="t" style="right:1333.8px;top:746.9px;line-height:14px;font-size:9.6px;color:#dedede;">34</div>
<div class="t" style="right:1188.8px;top:746.9px;line-height:14px;font-size:9.6px;color:#dedede;">2,029</div>
<div class="t" style="right:1054.6px;top:746.9px;line-height:14px;font-size:9.6px;color:#dedede;">5.75</div>
<div class="t" style="left:484.6px;top:746.9px;line-height:14px;font-size:9.6px;color:#dedede;">N</div>
<div class="t" style="right:909.6px;top:746.9px;line-height:14px;font-size:9.6px;color:#dedede;">5.95</div>
<div class="t" style="left:629.6px;top:746.9px;line-height:14px;font-size:9.6px;color:#dedede;">N</div>
<div class="t" style="right:760.8px;top:746.9px;line-height:14px;font-size:9.6px;color:#dedede;letter-spacing:-0.33px;">20 JUN 25</div>
<div class="t" style="right:623.5px;top:746.9px;line-height:14px;font-size:9.6px;color:#dedede;">143</div>
<div class="t" style="right:491.1px;top:746.9px;line-height:14px;font-size:9.6px;color:#dedede;">24.15</div>
<div class="t" style="left:1047.3px;top:746.9px;line-height:14px;font-size:9.6px;color:#dedede;">A</div>
<div class="t" style="right:346.1px;top:746.9px;line-height:14px;font-size:9.6px;color:#dedede;">26.10</div>
<div class="t" style="left:1192.3px;top:746.9px;line-height:14px;font-size:9.6px;color:#dedede;">C</div>
<div class="t" style="right:189.8px;top:746.9px;line-height:14px;font-size:9.6px;color:#dedede;">N/A</div>
<div class="t" style="right:45.8px;top:746.9px;line-height:14px;font-size:9.6px;color:#dedede;">1,186</div>
<div class="t" style="right:1333.8px;top:760.9px;line-height:14px;font-size:9.6px;color:#dedede;">117</div>
<div class="t" style="right:1188.8px;top:760.9px;line-height:14px;font-size:9.6px;color:#dedede;">3,504</div>
<div class="t" style="right:1054.6px;top:760.9px;line-height:14px;font-size:9.6px;color:#dedede;">5.60</div>
<div class="t" style="left:484.6px;top:760.9px;line-height:14px;font-size:9.6px;color:#dedede;">N</div>
<div class="t" style="right:909.6px;top:760.9px;line-height:14px;font-size:9.6px;color:#dedede;">5.70</div>
<div class="t" style="left:629.6px;top:760.9px;line-height:14px;font-size:9.6px;color:#dedede;">N</div>
<div class="t" style="right:760.8px;top:760.9px;line-height:14px;font-size:9.6px;color:#dedede;letter-spacing:-0.33px;">20 JUN 25</div>
<div class="t" style="right:623.5px;top:760.9px;line-height:14px;font-size:9.6px;color:#dedede;">144</div>
<div class="t" style="right:491.1px;top:760.9px;line-height:14px;font-size:9.6px;color:#dedede;">26.30</div>
<div class="t" style="left:1047.3px;top:760.9px;line-height:14px;font-size:9.6px;color:#dedede;">N</div>
<div class="t" style="right:346.1px;top:760.9px;line-height:14px;font-size:9.6px;color:#dedede;">26.85</div>
<div class="t" style="left:1192.3px;top:760.9px;line-height:14px;font-size:9.6px;color:#dedede;">W</div>
<div class="t" style="right:189.8px;top:760.9px;line-height:14px;font-size:9.6px;color:#dedede;">1</div>
<div class="t" style="right:45.8px;top:760.9px;line-height:14px;font-size:9.6px;color:#dedede;">1,885</div>
<div class="t" style="right:1333.8px;top:774.9px;line-height:14px;font-size:9.6px;color:#dedede;">1,662</div>
<div class="t" style="right:1188.8px;top:774.9px;line-height:14px;font-size:9.6px;color:#dedede;">54,124</div>
<div class="t" style="right:1054.6px;top:774.9px;line-height:14px;font-size:9.6px;color:#dedede;">5.35</div>
<div class="t" style="left:484.6px;top:774.9px;line-height:14px;font-size:9.6px;color:#dedede;">C</div>
<div class="t" style="right:909.6px;top:774.9px;line-height:14px;font-size:9.6px;color:#dedede;">5.50</div>
<div class="t" style="left:629.6px;top:774.9px;line-height:14px;font-size:9.6px;color:#dedede;">A</div>
<div class="t" style="right:760.8px;top:774.9px;line-height:14px;font-size:9.6px;color:#dedede;letter-spacing:-0.33px;">20 JUN 25</div>
<div class="t" style="right:623.5px;top:774.9px;line-height:14px;font-size:9.6px;color:#dedede;">145</div>
<div class="t" style="right:491.1px;top:774.9px;line-height:14px;font-size:9.6px;color:#dedede;">27.10</div>
<div class="t" style="left:1047.3px;top:774.9px;line-height:14px;font-size:9.6px;color:#dedede;">N</div>
<div class="t" style="right:346.1px;top:774.9px;line-height:14px;font-size:9.6px;color:#dedede;">27.60</div>
<div class="t" style="left:1192.3px;top:774.9px;line-height:14px;font-size:9.6px;color:#dedede;">C</div>
<div class="t" style="right:189.8px;top:774.9px;line-height:14px;font-size:9.6px;color:#dedede;">39</div>
<div class="t" style="right:45.8px;top:774.9px;line-height:14px;font-size:9.6px;color:#dedede;">14,965</div>
<div class="t" style="right:1333.8px;top:788.9px;line-height:14px;font-size:9.6px;color:#dedede;">57</div>
<div class="t" style="right:1188.8px;top:788.9px;line-height:14px;font-size:9.6px;color:#dedede;">3,235</div>
<div class="t" style="right:1054.6px;top:788.9px;line-height:14px;font-size:9.6px;color:#dedede;">5.15</div>
<div class="t" style="left:484.6px;top:788.9px;line-height:14px;font-size:9.6px;color:#dedede;">N</div>
<div class="t" style="right:909.6px;top:788.9px;line-height:14px;font-size:9.6px;color:#dedede;">5.25</div>
<div class="t" style="left:629.6px;top:788.9px;line-height:14px;font-size:9.6px;color:#dedede;">N</div>
<div class="t" style="right:760.8px;top:788.9px;line-height:14px;font-size:9.6px;color:#dedede;letter-spacing:-0.33px;">20 JUN 25</div>
<div class="t" style="right:623.5px;top:788.9px;line-height:14px;font-size:9.6px;color:#dedede;">146</div>
<div class="t" style="right:491.1px;top:788.9px;line-height:14px;font-size:9.6px;color:#dedede;">27.85</div>
<div class="t" style="left:1047.3px;top:788.9px;line-height:14px;font-size:9.6px;color:#dedede;">D</div>
<div class="t" style="right:346.1px;top:788.9px;line-height:14px;font-size:9.6px;color:#dedede;">28.40</div>
<div class="t" style="left:1192.3px;top:788.9px;line-height:14px;font-size:9.6px;color:#dedede;">C</div>
<div class="t" style="right:189.8px;top:788.9px;line-height:14px;font-size:9.6px;color:#dedede;">N/A</div>
<div class="t" style="right:45.8px;top:788.9px;line-height:14px;font-size:9.6px;color:#dedede;">1,527</div>
<div class="t" style="right:1333.8px;top:802.9px;line-height:14px;font-size:9.6px;color:#dedede;">568</div>
<div class="t" style="right:1188.8px;top:802.9px;line-height:14px;font-size:9.6px;color:#dedede;">2,692</div>
<div class="t" style="right:1054.6px;top:802.9px;line-height:14px;font-size:9.6px;color:#dedede;">4.95</div>
<div class="t" style="left:484.6px;top:802.9px;line-height:14px;font-size:9.6px;color:#dedede;">N</div>
<div class="t" style="right:909.6px;top:802.9px;line-height:14px;font-size:9.6px;color:#dedede;">5.05</div>
<div class="t" style="left:629.6px;top:802.9px;line-height:14px;font-size:9.6px;color:#dedede;">A</div>
<div class="t" style="right:760.8px;top:802.9px;line-height:14px;font-size:9.6px;color:#dedede;letter-spacing:-0.33px;">20 JUN 25</div>
<div class="t" style="right:623.5px;top:802.9px;line-height:14px;font-size:9.6px;color:#dedede;">147</div>
<div class="t" style="right:491.1px;top:802.9px;line-height:14px;font-size:9.6px;color:#dedede;">28.65</div>
<div class="t" style="left:1047.3px;top:802.9px;line-height:14px;font-size:9.6px;color:#dedede;">N</div>
<div class="t" style="right:346.1px;top:802.9px;line-height:14px;font-size:9.6px;color:#dedede;">29.20</div>
<div class="t" style="left:1192.3px;top:802.9px;line-height:14px;font-size:9.6px;color:#dedede;">N</div>
<div class="t" style="right:189.8px;top:802.9px;line-height:14px;font-size:9.6px;color:#dedede;">N/A</div>
<div class="t" style="right:45.8px;top:802.9px;line-height:14px;font-size:9.6px;color:#dedede;">2,507</div>
<div class="t" style="right:1333.8px;top:816.9px;line-height:14px;font-size:9.6px;color:#dedede;">180</div>
<div class="t" style="right:1188.8px;top:816.9px;line-height:14px;font-size:9.6px;color:#dedede;">6,023</div>
<div class="t" style="right:1054.6px;top:816.9px;line-height:14px;font-size:9.6px;color:#dedede;">4.75</div>
<div class="t" style="left:484.6px;top:816.9px;line-height:14px;font-size:9.6px;color:#dedede;">N</div>
<div class="t" style="right:909.6px;top:816.9px;line-height:14px;font-size:9.6px;color:#dedede;">4.85</div>
<div class="t" style="left:629.6px;top:816.9px;line-height:14px;font-size:9.6px;color:#dedede;">A</div>
<div class="t" style="right:760.8px;top:816.9px;line-height:14px;font-size:9.6px;color:#dedede;letter-spacing:-0.33px;">20 JUN 25</div>
<div class="t" style="right:623.5px;top:816.9px;line-height:14px;font-size:9.6px;color:#dedede;">148</div>
<div class="t" style="right:491.1px;top:816.9px;line-height:14px;font-size:9.6px;color:#dedede;">29.50</div>
<div class="t" style="left:1047.3px;top:816.9px;line-height:14px;font-size:9.6px;color:#dedede;">N</div>
<div class="t" style="right:346.1px;top:816.9px;line-height:14px;font-size:9.6px;color:#dedede;">30.05</div>
<div class="t" style="left:1192.3px;top:816.9px;line-height:14px;font-size:9.6px;color:#dedede;">W</div>
<div class="t" style="right:189.8px;top:816.9px;line-height:14px;font-size:9.6px;color:#dedede;">N/A</div>
<div class="t" style="right:45.8px;top:816.9px;line-height:14px;font-size:9.6px;color:#dedede;">895</div>
<div class="t" style="right:1333.8px;top:830.9px;line-height:14px;font-size:9.6px;color:#dedede;">482</div>
<div class="t" style="right:1188.8px;top:830.9px;line-height:14px;font-size:9.6px;color:#dedede;">2,497</div>
<div class="t" style="right:1054.6px;top:830.9px;line-height:14px;font-size:9.6px;color:#dedede;">4.45</div>
<div class="t" style="left:484.6px;top:830.9px;line-height:14px;font-size:9.6px;color:#dedede;">W</div>
<div class="t" style="right:909.6px;top:830.9px;line-height:14px;font-size:9.6px;color:#dedede;">4.65</div>
<div class="t" style="left:629.6px;top:830.9px;line-height:14px;font-size:9.6px;color:#dedede;">P</div>
<div class="t" style="right:760.8px;top:830.9px;line-height:14px;font-size:9.6px;color:#dedede;letter-spacing:-0.33px;">20 JUN 25</div>
<div class="t" style="right:623.5px;top:830.9px;line-height:14px;font-size:9.6px;color:#dedede;">149</div>
<div class="t" style="right:491.1px;top:830.9px;line-height:14px;font-size:9.6px;color:#dedede;">28.90</div>
<div class="t" style="left:1047.3px;top:830.9px;line-height:14px;font-size:9.6px;color:#dedede;">N</div>
<div class="t" style="right:346.1px;top:830.9px;line-height:14px;font-size:9.6px;color:#dedede;">30.85</div>
<div class="t" style="left:1192.3px;top:830.9px;line-height:14px;font-size:9.6px;color:#dedede;">C</div>
<div class="t" style="right:189.8px;top:830.9px;line-height:14px;font-size:9.6px;color:#dedede;">1</div>
<div class="t" style="right:45.8px;top:830.9px;line-height:14px;font-size:9.6px;color:#dedede;">1,027</div>
<div class="t" style="right:1333.8px;top:844.9px;line-height:14px;font-size:9.6px;color:#dedede;">7,941</div>
<div class="t" style="right:1188.8px;top:844.9px;line-height:14px;font-size:9.6px;color:#dedede;">120,820</div>
<div class="t" style="right:1054.6px;top:844.9px;line-height:14px;font-size:9.6px;color:#dedede;">4.35</div>
<div class="t" style="left:484.6px;top:844.9px;line-height:14px;font-size:9.6px;color:#dedede;">C</div>
<div class="t" style="right:909.6px;top:844.9px;line-height:14px;font-size:9.6px;color:#dedede;">4.45</div>
<div class="t" style="left:629.6px;top:844.9px;line-height:14px;font-size:9.6px;color:#dedede;">N</div>
<div class="t" style="right:760.8px;top:844.9px;line-height:14px;font-size:9.6px;color:#dedede;letter-spacing:-0.33px;">20 JUN 25</div>
<div class="t" style="right:623.5px;top:844.9px;line-height:14px;font-size:9.6px;color:#dedede;">150</div>
<div class="t" style="right:491.1px;top:844.9px;line-height:14px;font-size:9.6px;color:#dedede;">31.15</div>
<div class="t" style="left:1047.3px;top:844.9px;line-height:14px;font-size:9.6px;color:#dedede;">N</div>
<div class="t" style="right:346.1px;top:844.9px;line-height:14px;font-size:9.6px;color:#dedede;">31.65</div>
<div class="t" style="left:1192.3px;top:844.9px;line-height:14px;font-size:9.6px;color:#dedede;">D</div>
<div class="t" style="right:189.8px;top:844.9px;line-height:14px;font-size:9.6px;color:#dedede;">19</div>
<div class="t" style="right:45.8px;top:844.9px;line-height:14px;font-size:9.6px;color:#dedede;">11,488</div>
<div class="t" style="right:1333.8px;top:858.9px;line-height:14px;font-size:9.6px;color:#dedede;">118</div>
<div class="t" style="right:1188.8px;top:858.9px;line-height:14px;font-size:9.6px;color:#dedede;">4,935</div>
<div class="t" style="right:1054.6px;top:858.9px;line-height:14px;font-size:9.6px;color:#dedede;">4.15</div>
<div class="t" style="left:484.6px;top:858.9px;line-height:14px;font-size:9.6px;color:#dedede;">C</div>
<div class="t" style="right:909.6px;top:858.9px;line-height:14px;font-size:9.6px;color:#dedede;">4.30</div>
<div class="t" style="left:629.6px;top:858.9px;line-height:14px;font-size:9.6px;color:#dedede;">C</div>
<div class="t" style="right:760.8px;top:858.9px;line-height:14px;font-size:9.6px;color:#dedede;letter-spacing:-0.33px;">20 JUN 25</div>
<div class="t" style="right:623.5px;top:858.9px;line-height:14px;font-size:9.6px;color:#dedede;">151</div>
<div class="t" style="right:491.1px;top:858.9px;line-height:14px;font-size:9.6px;color:#dedede;">31.90</div>
<div class="t" style="left:1047.3px;top:858.9px;line-height:14px;font-size:9.6px;color:#dedede;">D</div>
<div class="t" style="right:346.1px;top:858.9px;line-height:14px;font-size:9.6px;color:#dedede;">32.50</div>
<div class="t" style="left:1192.3px;top:858.9px;line-height:14px;font-size:9.6px;color:#dedede;">C</div>
<div class="t" style="right:189.8px;top:858.9px;line-height:14px;font-size:9.6px;color:#dedede;">25</div>
<div class="t" style="right:45.8px;top:858.9px;line-height:14px;font-size:9.6px;color:#dedede;">551</div>
<div class="t" style="right:1333.8px;top:872.9px;line-height:14px;font-size:9.6px;color:#dedede;">116</div>
<div class="t" style="right:1188.8px;top:872.9px;line-height:14px;font-size:9.6px;color:#dedede;">5,024</div>
<div class="t" style="right:1054.6px;top:872.9px;line-height:14px;font-size:9.6px;color:#dedede;">4.00</div>
<div class="t" style="left:484.6px;top:872.9px;line-height:14px;font-size:9.6px;color:#dedede;">N</div>
<div class="t" style="right:909.6px;top:872.9px;line-height:14px;font-size:9.6px;color:#dedede;">4.10</div>
<div class="t" style="left:629.6px;top:872.9px;line-height:14px;font-size:9.6px;color:#dedede;">P</div>
<div class="t" style="right:760.8px;top:872.9px;line-height:14px;font-size:9.6px;color:#dedede;letter-spacing:-0.33px;">20 JUN 25</div>
<div class="t" style="right:623.5px;top:872.9px;line-height:14px;font-size:9.6px;color:#dedede;">152</div>
<div class="t" style="right:491.1px;top:872.9px;line-height:14px;font-size:9.6px;color:#dedede;">32.70</div>
<div class="t" style="left:1047.3px;top:872.9px;line-height:14px;font-size:9.6px;color:#dedede;">N</div>
<div class="t" style="right:346.1px;top:872.9px;line-height:14px;font-size:9.6px;color:#dedede;">33.40</div>
<div class="t" style="left:1192.3px;top:872.9px;line-height:14px;font-size:9.6px;color:#dedede;">C</div>
<div class="t" style="right:189.8px;top:872.9px;line-height:14px;font-size:9.6px;color:#dedede;">5</div>
<div class="t" style="right:45.8px;top:872.9px;line-height:14px;font-size:9.6px;color:#dedede;">784</div>
<div class="t" style="right:1333.8px;top:886.9px;line-height:14px;font-size:9.6px;color:#dedede;">31</div>
<div class="t" style="right:1188.8px;top:886.9px;line-height:14px;font-size:9.6px;color:#dedede;">4,736</div>
<div class="t" style="right:1054.6px;top:886.9px;line-height:14px;font-size:9.6px;color:#dedede;">3.85</div>
<div class="t" style="left:484.6px;top:886.9px;line-height:14px;font-size:9.6px;color:#dedede;">N</div>
<div class="t" style="right:909.6px;top:886.9px;line-height:14px;font-size:9.6px;color:#dedede;">3.95</div>
<div class="t" style="left:629.6px;top:886.9px;line-height:14px;font-size:9.6px;color:#dedede;">A</div>
<div class="t" style="right:760.8px;top:886.9px;line-height:14px;font-size:9.6px;color:#dedede;letter-spacing:-0.33px;">20 JUN 25</div>
<div class="t" style="right:623.5px;top:886.9px;line-height:14px;font-size:9.6px;color:#dedede;">153</div>
<div class="t" style="right:491.1px;top:886.9px;line-height:14px;font-size:9.6px;color:#dedede;">32.25</div>
<div class="t" style="left:1047.3px;top:886.9px;line-height:14px;font-size:9.6px;color:#dedede;">N</div>
<div class="t" style="right:346.1px;top:886.9px;line-height:14px;font-size:9.6px;color:#dedede;">34.25</div>
<div class="t" style="left:1192.3px;top:886.9px;line-height:14px;font-size:9.6px;color:#dedede;">C</div>
<div class="t" style="right:189.8px;top:886.9px;line-height:14px;font-size:9.6px;color:#dedede;">N/A</div>
<div class="t" style="right:45.8px;top:886.9px;line-height:14px;font-size:9.6px;color:#dedede;">1,301</div>
<div class="t" style="right:1333.8px;top:900.9px;line-height:14px;font-size:9.6px;color:#dedede;">120</div>
<div class="t" style="right:1188.8px;top:900.9px;line-height:14px;font-size:9.6px;color:#dedede;">4,891</div>
<div class="t" style="right:1054.6px;top:900.9px;line-height:14px;font-size:9.6px;color:#dedede;">3.70</div>
<div class="t" style="left:484.6px;top:900.9px;line-height:14px;font-size:9.6px;color:#dedede;">N</div>
<div class="t" style="right:909.6px;top:900.9px;line-height:14px;font-size:9.6px;color:#dedede;">3.80</div>
<div class="t" style="left:629.6px;top:900.9px;line-height:14px;font-size:9.6px;color:#dedede;">J</div>
<div class="t" style="right:760.8px;top:900.9px;line-height:14px;font-size:9.6px;color:#dedede;letter-spacing:-0.33px;">20 JUN 25</div>
<div class="t" style="right:623.5px;top:900.9px;line-height:14px;font-size:9.6px;color:#dedede;">154</div>
<div class="t" style="right:491.1px;top:900.9px;line-height:14px;font-size:9.6px;color:#dedede;">34.40</div>
<div class="t" style="left:1047.3px;top:900.9px;line-height:14px;font-size:9.6px;color:#dedede;">N</div>
<div class="t" style="right:346.1px;top:900.9px;line-height:14px;font-size:9.6px;color:#dedede;">35.10</div>
<div class="t" style="left:1192.3px;top:900.9px;line-height:14px;font-size:9.6px;color:#dedede;">C</div>
<div class="t" style="right:189.8px;top:900.9px;line-height:14px;font-size:9.6px;color:#dedede;">19</div>
<div class="t" style="right:45.8px;top:900.9px;line-height:14px;font-size:9.6px;color:#dedede;">674</div>
<div class="t" style="right:1333.8px;top:914.9px;line-height:14px;font-size:9.6px;color:#dedede;">670</div>
<div class="t" style="right:1188.8px;top:914.9px;line-height:14px;font-size:9.6px;color:#dedede;">34,637</div>
<div class="t" style="right:1054.6px;top:914.9px;line-height:14px;font-size:9.6px;color:#dedede;">3.50</div>
<div class="t" style="left:484.6px;top:914.9px;line-height:14px;font-size:9.6px;color:#dedede;">B</div>
<div class="t" style="right:909.6px;top:914.9px;line-height:14px;font-size:9.6px;color:#dedede;">3.60</div>
<div class="t" style="left:629.6px;top:914.9px;line-height:14px;font-size:9.6px;color:#dedede;">N</div>
<div class="t" style="right:760.8px;top:914.9px;line-height:14px;font-size:9.6px;color:#dedede;letter-spacing:-0.33px;">20 JUN 25</div>
<div class="t" style="right:623.5px;top:914.9px;line-height:14px;font-size:9.6px;color:#dedede;">155</div>
<div class="t" style="right:491.1px;top:914.9px;line-height:14px;font-size:9.6px;color:#dedede;">35.30</div>
<div class="t" style="left:1047.3px;top:914.9px;line-height:14px;font-size:9.6px;color:#dedede;">D</div>
<div class="t" style="right:346.1px;top:914.9px;line-height:14px;font-size:9.6px;color:#dedede;">35.85</div>
<div class="t" style="left:1192.3px;top:914.9px;line-height:14px;font-size:9.6px;color:#dedede;">C</div>
<div class="t" style="right:189.8px;top:914.9px;line-height:14px;font-size:9.6px;color:#dedede;">24</div>
<div class="t" style="right:45.8px;top:914.9px;line-height:14px;font-size:9.6px;color:#dedede;">1,392</div>
<div class="t" style="right:1333.8px;top:928.9px;line-height:14px;font-size:9.6px;color:#dedede;">32</div>
<div class="t" style="right:1188.8px;top:928.9px;line-height:14px;font-size:9.6px;color:#dedede;">7,094</div>
<div class="t" style="right:1054.6px;top:928.9px;line-height:14px;font-size:9.6px;color:#dedede;">3.30</div>
<div class="t" style="left:484.6px;top:928.9px;line-height:14px;font-size:9.6px;color:#dedede;">C</div>
<div class="t" style="right:909.6px;top:928.9px;line-height:14px;font-size:9.6px;color:#dedede;">3.50</div>
<div class="t" style="left:629.6px;top:928.9px;line-height:14px;font-size:9.6px;color:#dedede;">N</div>
<div class="t" style="right:760.8px;top:928.9px;line-height:14px;font-size:9.6px;color:#dedede;letter-spacing:-0.33px;">20 JUN 25</div>
<div class="t" style="right:623.5px;top:928.9px;line-height:14px;font-size:9.6px;color:#dedede;">156</div>
<div class="t" style="right:491.1px;top:928.9px;line-height:14px;font-size:9.6px;color:#dedede;">34.85</div>
<div class="t" style="left:1047.3px;top:928.9px;line-height:14px;font-size:9.6px;color:#dedede;">A</div>
<div class="t" style="right:346.1px;top:928.9px;line-height:14px;font-size:9.6px;color:#dedede;">36.70</div>
<div class="t" style="left:1192.3px;top:928.9px;line-height:14px;font-size:9.6px;color:#dedede;">N</div>
<div class="t" style="right:189.8px;top:928.9px;line-height:14px;font-size:9.6px;color:#dedede;">2</div>
<div class="t" style="right:45.8px;top:928.9px;line-height:14px;font-size:9.6px;color:#dedede;">872</div>
<div class="t" style="right:1333.8px;top:942.9px;line-height:14px;font-size:9.6px;color:#dedede;">33</div>
<div class="t" style="right:1188.8px;top:942.9px;line-height:14px;font-size:9.6px;color:#dedede;">6,056</div>
<div class="t" style="right:1054.6px;top:942.9px;line-height:14px;font-size:9.6px;color:#dedede;">3.25</div>
<div class="t" style="left:484.6px;top:942.9px;line-height:14px;font-size:9.6px;color:#dedede;">N</div>
<div class="t" style="right:909.6px;top:942.9px;line-height:14px;font-size:9.6px;color:#dedede;">3.35</div>
<div class="t" style="left:629.6px;top:942.9px;line-height:14px;font-size:9.6px;color:#dedede;">A</div>
<div class="t" style="right:760.8px;top:942.9px;line-height:14px;font-size:9.6px;color:#dedede;letter-spacing:-0.33px;">20 JUN 25</div>
<div class="t" style="right:623.5px;top:942.9px;line-height:14px;font-size:9.6px;color:#dedede;">157</div>
<div class="t" style="right:491.1px;top:942.9px;line-height:14px;font-size:9.6px;color:#dedede;">35.70</div>
<div class="t" style="left:1047.3px;top:942.9px;line-height:14px;font-size:9.6px;color:#dedede;">A</div>
<div class="t" style="right:346.1px;top:942.9px;line-height:14px;font-size:9.6px;color:#dedede;">37.60</div>
<div class="t" style="left:1192.3px;top:942.9px;line-height:14px;font-size:9.6px;color:#dedede;">C</div>
<div class="t" style="right:189.8px;top:942.9px;line-height:14px;font-size:9.6px;color:#dedede;">25</div>
<div class="t" style="right:45.8px;top:942.9px;line-height:14px;font-size:9.6px;color:#dedede;">1,440</div>
<div class="t" style="right:1333.8px;top:956.9px;line-height:14px;font-size:9.6px;color:#dedede;">44</div>
<div class="t" style="right:1188.8px;top:956.9px;line-height:14px;font-size:9.6px;color:#dedede;">7,197</div>
<div class="t" style="right:1054.6px;top:956.9px;line-height:14px;font-size:9.6px;color:#dedede;">3.10</div>
<div class="t" style="left:484.6px;top:956.9px;line-height:14px;font-size:9.6px;color:#dedede;">W</div>
<div class="t" style="right:909.6px;top:956.9px;line-height:14px;font-size:9.6px;color:#dedede;">3.30</div>
<div class="t" style="left:629.6px;top:956.9px;line-height:14px;font-size:9.6px;color:#dedede;">Z</div>
<div class="t" style="right:760.8px;top:956.9px;line-height:14px;font-size:9.6px;color:#dedede;letter-spacing:-0.33px;">20 JUN 25</div>
<div class="t" style="right:623.5px;top:956.9px;line-height:14px;font-size:9.6px;color:#dedede;">158</div>
<div class="t" style="right:491.1px;top:956.9px;line-height:14px;font-size:9.6px;color:#dedede;">37.90</div>
<div class="t" style="left:1047.3px;top:956.9px;line-height:14px;font-size:9.6px;color:#dedede;">N</div>
<div class="t" style="right:346.1px;top:956.9px;line-height:14px;font-size:9.6px;color:#dedede;">38.55</div>
<div class="t" style="left:1192.3px;top:956.9px;line-height:14px;font-size:9.6px;color:#dedede;">N</div>
<div class="t" style="right:189.8px;top:956.9px;line-height:14px;font-size:9.6px;color:#dedede;">42</div>
<div class="t" style="right:45.8px;top:956.9px;line-height:14px;font-size:9.6px;color:#dedede;">1,069</div>
<div class="t" style="right:1333.8px;top:970.9px;line-height:14px;font-size:9.6px;color:#dedede;">13</div>
<div class="t" style="right:1188.8px;top:970.9px;line-height:14px;font-size:9.6px;color:#dedede;">3,058</div>
<div class="t" style="right:1054.6px;top:970.9px;line-height:14px;font-size:9.6px;color:#dedede;">3.00</div>
<div class="t" style="left:484.6px;top:970.9px;line-height:14px;font-size:9.6px;color:#dedede;">N</div>
<div class="t" style="right:909.6px;top:970.9px;line-height:14px;font-size:9.6px;color:#dedede;">3.05</div>
<div class="t" style="left:629.6px;top:970.9px;line-height:14px;font-size:9.6px;color:#dedede;">N</div>
<div class="t" style="right:760.8px;top:970.9px;line-height:14px;font-size:9.6px;color:#dedede;letter-spacing:-0.33px;">20 JUN 25</div>
<div class="t" style="right:623.5px;top:970.9px;line-height:14px;font-size:9.6px;color:#dedede;">159</div>
<div class="t" style="right:491.1px;top:970.9px;line-height:14px;font-size:9.6px;color:#dedede;">37.50</div>
<div class="t" style="left:1047.3px;top:970.9px;line-height:14px;font-size:9.6px;color:#dedede;">N</div>
<div class="t" style="right:346.1px;top:970.9px;line-height:14px;font-size:9.6px;color:#dedede;">39.35</div>
<div class="t" style="left:1192.3px;top:970.9px;line-height:14px;font-size:9.6px;color:#dedede;">C</div>
<div class="t" style="right:189.8px;top:970.9px;line-height:14px;font-size:9.6px;color:#dedede;">82</div>
<div class="t" style="right:45.8px;top:970.9px;line-height:14px;font-size:9.6px;color:#dedede;">1,298</div>
<div class="t" style="right:1333.8px;top:984.9px;line-height:14px;font-size:9.6px;color:#dedede;">3,408</div>
<div class="t" style="right:1188.8px;top:984.9px;line-height:14px;font-size:9.6px;color:#dedede;">49,882</div>
<div class="t" style="right:1054.6px;top:984.9px;line-height:14px;font-size:9.6px;color:#dedede;">2.87</div>
<div class="t" style="left:484.6px;top:984.9px;line-height:14px;font-size:9.6px;color:#dedede;">N</div>
<div class="t" style="right:909.6px;top:984.9px;line-height:14px;font-size:9.6px;color:#dedede;">2.95</div>
<div class="t" style="left:629.6px;top:984.9px;line-height:14px;font-size:9.6px;color:#dedede;">Z</div>
<div class="t" style="right:760.8px;top:984.9px;line-height:14px;font-size:9.6px;color:#dedede;letter-spacing:-0.33px;">20 JUN 25</div>
<div class="t" style="right:623.5px;top:984.9px;line-height:14px;font-size:9.6px;color:#dedede;">160</div>
<div class="t" style="right:491.1px;top:984.9px;line-height:14px;font-size:9.6px;color:#dedede;">39.75</div>
<div class="t" style="left:1047.3px;top:984.9px;line-height:14px;font-size:9.6px;color:#dedede;">N</div>
<div class="t" style="right:346.1px;top:984.9px;line-height:14px;font-size:9.6px;color:#dedede;">40.25</div>
<div class="t" style="left:1192.3px;top:984.9px;line-height:14px;font-size:9.6px;color:#dedede;">N</div>
<div class="t" style="right:189.8px;top:984.9px;line-height:14px;font-size:9.6px;color:#dedede;">44</div>
<div class="t" style="right:45.8px;top:984.9px;line-height:14px;font-size:9.6px;color:#dedede;">3,177</div>
<div class="t" style="right:1333.8px;top:998.9px;line-height:14px;font-size:9.6px;color:#dedede;">17</div>
<div class="t" style="right:1188.8px;top:998.9px;line-height:14px;font-size:9.6px;color:#dedede;">5,308</div>
<div class="t" style="right:1054.6px;top:998.9px;line-height:14px;font-size:9.6px;color:#dedede;">2.76</div>
<div class="t" style="left:484.6px;top:998.9px;line-height:14px;font-size:9.6px;color:#dedede;">N</div>
<div class="t" style="right:909.6px;top:998.9px;line-height:14px;font-size:9.6px;color:#dedede;">2.80</div>
<div class="t" style="left:629.6px;top:998.9px;line-height:14px;font-size:9.6px;color:#dedede;">N</div>
<div class="t" style="right:760.8px;top:998.9px;line-height:14px;font-size:9.6px;color:#dedede;letter-spacing:-0.33px;">20 JUN 25</div>
<div class="t" style="right:623.5px;top:998.9px;line-height:14px;font-size:9.6px;color:#dedede;">161</div>
<div class="t" style="right:491.1px;top:998.9px;line-height:14px;font-size:9.6px;color:#dedede;">40.60</div>
<div class="t" style="left:1047.3px;top:998.9px;line-height:14px;font-size:9.6px;color:#dedede;">N</div>
<div class="t" style="right:346.1px;top:998.9px;line-height:14px;font-size:9.6px;color:#dedede;">41.15</div>
<div class="t" style="left:1192.3px;top:998.9px;line-height:14px;font-size:9.6px;color:#dedede;">X</div>
<div class="t" style="right:189.8px;top:998.9px;line-height:14px;font-size:9.6px;color:#dedede;">N/A</div>
<div class="t" style="right:45.8px;top:998.9px;line-height:14px;font-size:9.6px;color:#dedede;">353</div>
<div class="t" style="right:1333.8px;top:1012.9px;line-height:14px;font-size:9.6px;color:#dedede;">92</div>
<div class="t" style="right:1188.8px;top:1012.9px;line-height:14px;font-size:9.6px;color:#dedede;">3,769</div>
<div class="t" style="right:1054.6px;top:1012.9px;line-height:14px;font-size:9.6px;color:#dedede;">2.64</div>
<div class="t" style="left:484.6px;top:1012.9px;line-height:14px;font-size:9.6px;color:#dedede;">N</div>
<div class="t" style="right:909.6px;top:1012.9px;line-height:14px;font-size:9.6px;color:#dedede;">2.75</div>
<div class="t" style="left:629.6px;top:1012.9px;line-height:14px;font-size:9.6px;color:#dedede;">P</div>
<div class="t" style="right:760.8px;top:1012.9px;line-height:14px;font-size:9.6px;color:#dedede;letter-spacing:-0.33px;">20 JUN 25</div>
<div class="t" style="right:623.5px;top:1012.9px;line-height:14px;font-size:9.6px;color:#dedede;">162</div>
<div class="t" style="right:491.1px;top:1012.9px;line-height:14px;font-size:9.6px;color:#dedede;">41.40</div>
<div class="t" style="left:1047.3px;top:1012.9px;line-height:14px;font-size:9.6px;color:#dedede;">N</div>
<div class="t" style="right:346.1px;top:1012.9px;line-height:14px;font-size:9.6px;color:#dedede;">42.10</div>
<div class="t" style="left:1192.3px;top:1012.9px;line-height:14px;font-size:9.6px;color:#dedede;">N</div>
<div class="t" style="right:189.8px;top:1012.9px;line-height:14px;font-size:9.6px;color:#dedede;">N/A</div>
<div class="t" style="right:45.8px;top:1012.9px;line-height:14px;font-size:9.6px;color:#dedede;">313</div>
<div class="t" style="right:1333.8px;top:1026.9px;line-height:14px;font-size:9.6px;color:#dedede;">19</div>
<div class="t" style="right:1188.8px;top:1026.9px;line-height:14px;font-size:9.6px;color:#dedede;">2,236</div>
<div class="t" style="right:1054.6px;top:1026.9px;line-height:14px;font-size:9.6px;color:#dedede;">2.54</div>
<div class="t" style="left:484.6px;top:1026.9px;line-height:14px;font-size:9.6px;color:#dedede;">N</div>
<div class="t" style="right:909.6px;top:1026.9px;line-height:14px;font-size:9.6px;color:#dedede;">2.58</div>
<div class="t" style="left:629.6px;top:1026.9px;line-height:14px;font-size:9.6px;color:#dedede;">N</div>
<div class="t" style="right:760.8px;top:1026.9px;line-height:14px;font-size:9.6px;color:#dedede;letter-spacing:-0.33px;">20 JUN 25</div>
<div class="t" style="right:623.5px;top:1026.9px;line-height:14px;font-size:9.6px;color:#dedede;">163</div>
<div class="t" style="right:491.1px;top:1026.9px;line-height:14px;font-size:9.6px;color:#dedede;">42.35</div>
<div class="t" style="left:1047.3px;top:1026.9px;line-height:14px;font-size:9.6px;color:#dedede;">D</div>
<div class="t" style="right:346.1px;top:1026.9px;line-height:14px;font-size:9.6px;color:#dedede;">42.95</div>
<div class="t" style="left:1192.3px;top:1026.9px;line-height:14px;font-size:9.6px;color:#dedede;">C</div>
<div class="t" style="right:189.8px;top:1026.9px;line-height:14px;font-size:9.6px;color:#dedede;">N/A</div>
<div class="t" style="right:45.8px;top:1026.9px;line-height:14px;font-size:9.6px;color:#dedede;">242</div>
<div class="t" style="right:1333.8px;top:1040.9px;line-height:14px;font-size:9.6px;color:#dedede;">10</div>
<div class="t" style="right:1188.8px;top:1040.9px;line-height:14px;font-size:9.6px;color:#dedede;">6,833</div>
<div class="t" style="right:1054.6px;top:1040.9px;line-height:14px;font-size:9.6px;color:#dedede;">2.41</div>
<div class="t" style="left:484.6px;top:1040.9px;line-height:14px;font-size:9.6px;color:#dedede;">C</div>
<div class="t" style="right:909.6px;top:1040.9px;line-height:14px;font-size:9.6px;color:#dedede;">2.54</div>
<div class="t" style="left:629.6px;top:1040.9px;line-height:14px;font-size:9.6px;color:#dedede;">Z</div>
<div class="t" style="right:760.8px;top:1040.9px;line-height:14px;font-size:9.6px;color:#dedede;letter-spacing:-0.33px;">20 JUN 25</div>
<div class="t" style="right:623.5px;top:1040.9px;line-height:14px;font-size:9.6px;color:#dedede;">164</div>
<div class="t" style="right:491.1px;top:1040.9px;line-height:14px;font-size:9.6px;color:#dedede;">42.00</div>
<div class="t" style="left:1047.3px;top:1040.9px;line-height:14px;font-size:9.6px;color:#dedede;">A</div>
<div class="t" style="right:346.1px;top:1040.9px;line-height:14px;font-size:9.6px;color:#dedede;">43.80</div>
<div class="t" style="left:1192.3px;top:1040.9px;line-height:14px;font-size:9.6px;color:#dedede;">N</div>
<div class="t" style="right:189.8px;top:1040.9px;line-height:14px;font-size:9.6px;color:#dedede;">17</div>
<div class="t" style="right:45.8px;top:1040.9px;line-height:14px;font-size:9.6px;color:#dedede;">290</div>
<div class="t" style="right:1333.8px;top:1054.9px;line-height:14px;font-size:9.6px;color:#dedede;">213</div>
<div class="t" style="right:1188.8px;top:1054.9px;line-height:14px;font-size:9.6px;color:#dedede;">36,498</div>
<div class="t" style="right:1054.6px;top:1054.9px;line-height:14px;font-size:9.6px;color:#dedede;">2.34</div>
<div class="t" style="left:484.6px;top:1054.9px;line-height:14px;font-size:9.6px;color:#dedede;">N</div>
<div class="t" style="right:909.6px;top:1054.9px;line-height:14px;font-size:9.6px;color:#dedede;">2.40</div>
<div class="t" style="left:629.6px;top:1054.9px;line-height:14px;font-size:9.6px;color:#dedede;">I</div>
<div class="t" style="right:760.8px;top:1054.9px;line-height:14px;font-size:9.6px;color:#dedede;letter-spacing:-0.33px;">20 JUN 25</div>
<div class="t" style="right:623.5px;top:1054.9px;line-height:14px;font-size:9.6px;color:#dedede;">165</div>
<div class="t" style="right:491.1px;top:1054.9px;line-height:14px;font-size:9.6px;color:#dedede;">42.95</div>
<div class="t" style="left:1047.3px;top:1054.9px;line-height:14px;font-size:9.6px;color:#dedede;">A</div>
<div class="t" style="right:346.1px;top:1054.9px;line-height:14px;font-size:9.6px;color:#dedede;">44.75</div>
<div class="t" style="left:1192.3px;top:1054.9px;line-height:14px;font-size:9.6px;color:#dedede;">D</div>
<div class="t" style="right:189.8px;top:1054.9px;line-height:14px;font-size:9.6px;color:#dedede;">12</div>
<div class="t" style="right:45.8px;top:1054.9px;line-height:14px;font-size:9.6px;color:#dedede;">4,206</div>
<div class="t" style="right:1333.8px;top:1068.9px;line-height:14px;font-size:9.6px;color:#dedede;">11</div>
<div class="t" style="right:1188.8px;top:1068.9px;line-height:14px;font-size:9.6px;color:#dedede;">3,029</div>
<div class="t" style="right:1054.6px;top:1068.9px;line-height:14px;font-size:9.6px;color:#dedede;">2.24</div>
<div class="t" style="left:484.6px;top:1068.9px;line-height:14px;font-size:9.6px;color:#dedede;">N</div>
<div class="t" style="right:909.6px;top:1068.9px;line-height:14px;font-size:9.6px;color:#dedede;">2.29</div>
<div class="t" style="left:629.6px;top:1068.9px;line-height:14px;font-size:9.6px;color:#dedede;">N</div>
<div class="t" style="right:760.8px;top:1068.9px;line-height:14px;font-size:9.6px;color:#dedede;letter-spacing:-0.33px;">20 JUN 25</div>
<div class="t" style="right:623.5px;top:1068.9px;line-height:14px;font-size:9.6px;color:#dedede;">166</div>
<div class="t" style="right:491.1px;top:1068.9px;line-height:14px;font-size:9.6px;color:#dedede;">45.10</div>
<div class="t" style="left:1047.3px;top:1068.9px;line-height:14px;font-size:9.6px;color:#dedede;">N</div>
<div class="t" style="right:346.1px;top:1068.9px;line-height:14px;font-size:9.6px;color:#dedede;">45.75</div>
<div class="t" style="left:1192.3px;top:1068.9px;line-height:14px;font-size:9.6px;color:#dedede;">D</div>
<div class="t" style="right:189.8px;top:1068.9px;line-height:14px;font-size:9.6px;color:#dedede;">20</div>
<div class="t" style="right:45.8px;top:1068.9px;line-height:14px;font-size:9.6px;color:#dedede;">365</div>
<div class="t" style="right:1333.8px;top:1082.9px;line-height:14px;font-size:9.6px;color:#dedede;">11</div>
<div class="t" style="right:1188.8px;top:1082.9px;line-height:14px;font-size:9.6px;color:#dedede;">1,976</div>
<div class="t" style="right:1054.6px;top:1082.9px;line-height:14px;font-size:9.6px;color:#dedede;">2.16</div>
<div class="t" style="left:484.6px;top:1082.9px;line-height:14px;font-size:9.6px;color:#dedede;">N</div>
<div class="t" style="right:909.6px;top:1082.9px;line-height:14px;font-size:9.6px;color:#dedede;">2.20</div>
<div class="t" style="left:629.6px;top:1082.9px;line-height:14px;font-size:9.6px;color:#dedede;">N</div>
<div class="t" style="right:760.8px;top:1082.9px;line-height:14px;font-size:9.6px;color:#dedede;letter-spacing:-0.33px;">20 JUN 25</div>
<div class="t" style="right:623.5px;top:1082.9px;line-height:14px;font-size:9.6px;color:#dedede;">167</div>
<div class="t" style="right:491.1px;top:1082.9px;line-height:14px;font-size:9.6px;color:#dedede;">46.10</div>
<div class="t" style="left:1047.3px;top:1082.9px;line-height:14px;font-size:9.6px;color:#dedede;">N</div>
<div class="t" style="right:346.1px;top:1082.9px;line-height:14px;font-size:9.6px;color:#dedede;">46.70</div>
<div class="t" style="left:1192.3px;top:1082.9px;line-height:14px;font-size:9.6px;color:#dedede;">D</div>
<div class="t" style="right:189.8px;top:1082.9px;line-height:14px;font-size:9.6px;color:#dedede;">13</div>
<div class="t" style="right:45.8px;top:1082.9px;line-height:14px;font-size:9.6px;color:#dedede;">182</div>
<div class="t" style="right:1333.8px;top:1096.9px;line-height:14px;font-size:9.6px;color:#dedede;">397</div>
<div class="t" style="right:1188.8px;top:1096.9px;line-height:14px;font-size:9.6px;color:#dedede;">8,314</div>
<div class="t" style="right:1054.6px;top:1096.9px;line-height:14px;font-size:9.6px;color:#dedede;">2.07</div>
<div class="t" style="left:484.6px;top:1096.9px;line-height:14px;font-size:9.6px;color:#dedede;">N</div>
<div class="t" style="right:909.6px;top:1096.9px;line-height:14px;font-size:9.6px;color:#dedede;">2.11</div>
<div class="t" style="left:629.6px;top:1096.9px;line-height:14px;font-size:9.6px;color:#dedede;">N</div>
<div class="t" style="right:760.8px;top:1096.9px;line-height:14px;font-size:9.6px;color:#dedede;letter-spacing:-0.33px;">20 JUN 25</div>
<div class="t" style="right:623.5px;top:1096.9px;line-height:14px;font-size:9.6px;color:#dedede;">168</div>
<div class="t" style="right:491.1px;top:1096.9px;line-height:14px;font-size:9.6px;color:#dedede;">47.00</div>
<div class="t" style="left:1047.3px;top:1096.9px;line-height:14px;font-size:9.6px;color:#dedede;">N</div>
<div class="t" style="right:346.1px;top:1096.9px;line-height:14px;font-size:9.6px;color:#dedede;">47.55</div>
<div class="t" style="left:1192.3px;top:1096.9px;line-height:14px;font-size:9.6px;color:#dedede;">C</div>
<div class="t" style="right:189.8px;top:1096.9px;line-height:14px;font-size:9.6px;color:#dedede;">N/A</div>
<div class="t" style="right:45.8px;top:1096.9px;line-height:14px;font-size:9.6px;color:#dedede;">487</div>
<div class="t" style="right:1333.8px;top:1110.9px;line-height:14px;font-size:9.6px;color:#dedede;">33</div>
<div class="t" style="right:1188.8px;top:1110.9px;line-height:14px;font-size:9.6px;color:#dedede;">1,875</div>
<div class="t" style="right:1054.6px;top:1110.9px;line-height:14px;font-size:9.6px;color:#dedede;">1.96</div>
<div class="t" style="left:484.6px;top:1110.9px;line-height:14px;font-size:9.6px;color:#dedede;">W</div>
<div class="t" style="right:909.6px;top:1110.9px;line-height:14px;font-size:9.6px;color:#dedede;">2.06</div>
<div class="t" style="left:629.6px;top:1110.9px;line-height:14px;font-size:9.6px;color:#dedede;">Z</div>
<div class="t" style="right:760.8px;top:1110.9px;line-height:14px;font-size:9.6px;color:#dedede;letter-spacing:-0.33px;">20 JUN 25</div>
<div class="t" style="right:623.5px;top:1110.9px;line-height:14px;font-size:9.6px;color:#dedede;">169</div>
<div class="t" style="right:491.1px;top:1110.9px;line-height:14px;font-size:9.6px;color:#dedede;">47.80</div>
<div class="t" style="left:1047.3px;top:1110.9px;line-height:14px;font-size:9.6px;color:#dedede;">N</div>
<div class="t" style="right:346.1px;top:1110.9px;line-height:14px;font-size:9.6px;color:#dedede;">48.65</div>
<div class="t" style="left:1192.3px;top:1110.9px;line-height:14px;font-size:9.6px;color:#dedede;">C</div>
<div class="t" style="right:189.8px;top:1110.9px;line-height:14px;font-size:9.6px;color:#dedede;">N/A</div>
<div class="t" style="right:45.8px;top:1110.9px;line-height:14px;font-size:9.6px;color:#dedede;">109</div>
<div class="t" style="right:1333.8px;top:1124.9px;line-height:14px;font-size:9.6px;color:#dedede;">942</div>
<div class="t" style="right:1188.8px;top:1124.9px;line-height:14px;font-size:9.6px;color:#dedede;">32,553</div>
<div class="t" style="right:1054.6px;top:1124.9px;line-height:14px;font-size:9.6px;color:#dedede;">1.91</div>
<div class="t" style="left:484.6px;top:1124.9px;line-height:14px;font-size:9.6px;color:#dedede;">N</div>
<div class="t" style="right:909.6px;top:1124.9px;line-height:14px;font-size:9.6px;color:#dedede;">1.96</div>
<div class="t" style="left:629.6px;top:1124.9px;line-height:14px;font-size:9.6px;color:#dedede;">N</div>
<div class="t" style="right:760.8px;top:1124.9px;line-height:14px;font-size:9.6px;color:#dedede;letter-spacing:-0.33px;">20 JUN 25</div>
<div class="t" style="right:623.5px;top:1124.9px;line-height:14px;font-size:9.6px;color:#dedede;">170</div>
<div class="t" style="right:491.1px;top:1124.9px;line-height:14px;font-size:9.6px;color:#dedede;">48.80</div>
<div class="t" style="left:1047.3px;top:1124.9px;line-height:14px;font-size:9.6px;color:#dedede;">D</div>
<div class="t" style="right:346.1px;top:1124.9px;line-height:14px;font-size:9.6px;color:#dedede;">49.50</div>
<div class="t" style="left:1192.3px;top:1124.9px;line-height:14px;font-size:9.6px;color:#dedede;">D</div>
<div class="t" style="right:189.8px;top:1124.9px;line-height:14px;font-size:9.6px;color:#dedede;">N/A</div>
<div class="t" style="right:45.8px;top:1124.9px;line-height:14px;font-size:9.6px;color:#dedede;">786</div>
<div class="t" style="right:1333.8px;top:1138.9px;line-height:14px;font-size:9.6px;color:#dedede;">134</div>
<div class="t" style="right:1188.8px;top:1138.9px;line-height:14px;font-size:9.6px;color:#dedede;">5,603</div>
<div class="t" style="right:1054.6px;top:1138.9px;line-height:14px;font-size:9.6px;color:#dedede;">1.79</div>
<div class="t" style="left:484.6px;top:1138.9px;line-height:14px;font-size:9.6px;color:#dedede;">Z</div>
<div class="t" style="right:909.6px;top:1138.9px;line-height:14px;font-size:9.6px;color:#dedede;">1.92</div>
<div class="t" style="left:629.6px;top:1138.9px;line-height:14px;font-size:9.6px;color:#dedede;">Z</div>
<div class="t" style="right:760.8px;top:1138.9px;line-height:14px;font-size:9.6px;color:#dedede;letter-spacing:-0.33px;">20 JUN 25</div>
<div class="t" style="right:623.5px;top:1138.9px;line-height:14px;font-size:9.6px;color:#dedede;">171</div>
<div class="t" style="right:491.1px;top:1138.9px;line-height:14px;font-size:9.6px;color:#dedede;">49.75</div>
<div class="t" style="left:1047.3px;top:1138.9px;line-height:14px;font-size:9.6px;color:#dedede;">N</div>
<div class="t" style="right:346.1px;top:1138.9px;line-height:14px;font-size:9.6px;color:#dedede;">50.50</div>
<div class="t" style="left:1192.3px;top:1138.9px;line-height:14px;font-size:9.6px;color:#dedede;">N</div>
<div class="t" style="right:189.8px;top:1138.9px;line-height:14px;font-size:9.6px;color:#dedede;">N/A</div>
<div class="t" style="right:45.8px;top:1138.9px;line-height:14px;font-size:9.6px;color:#dedede;">217</div>
</div></body></html>
